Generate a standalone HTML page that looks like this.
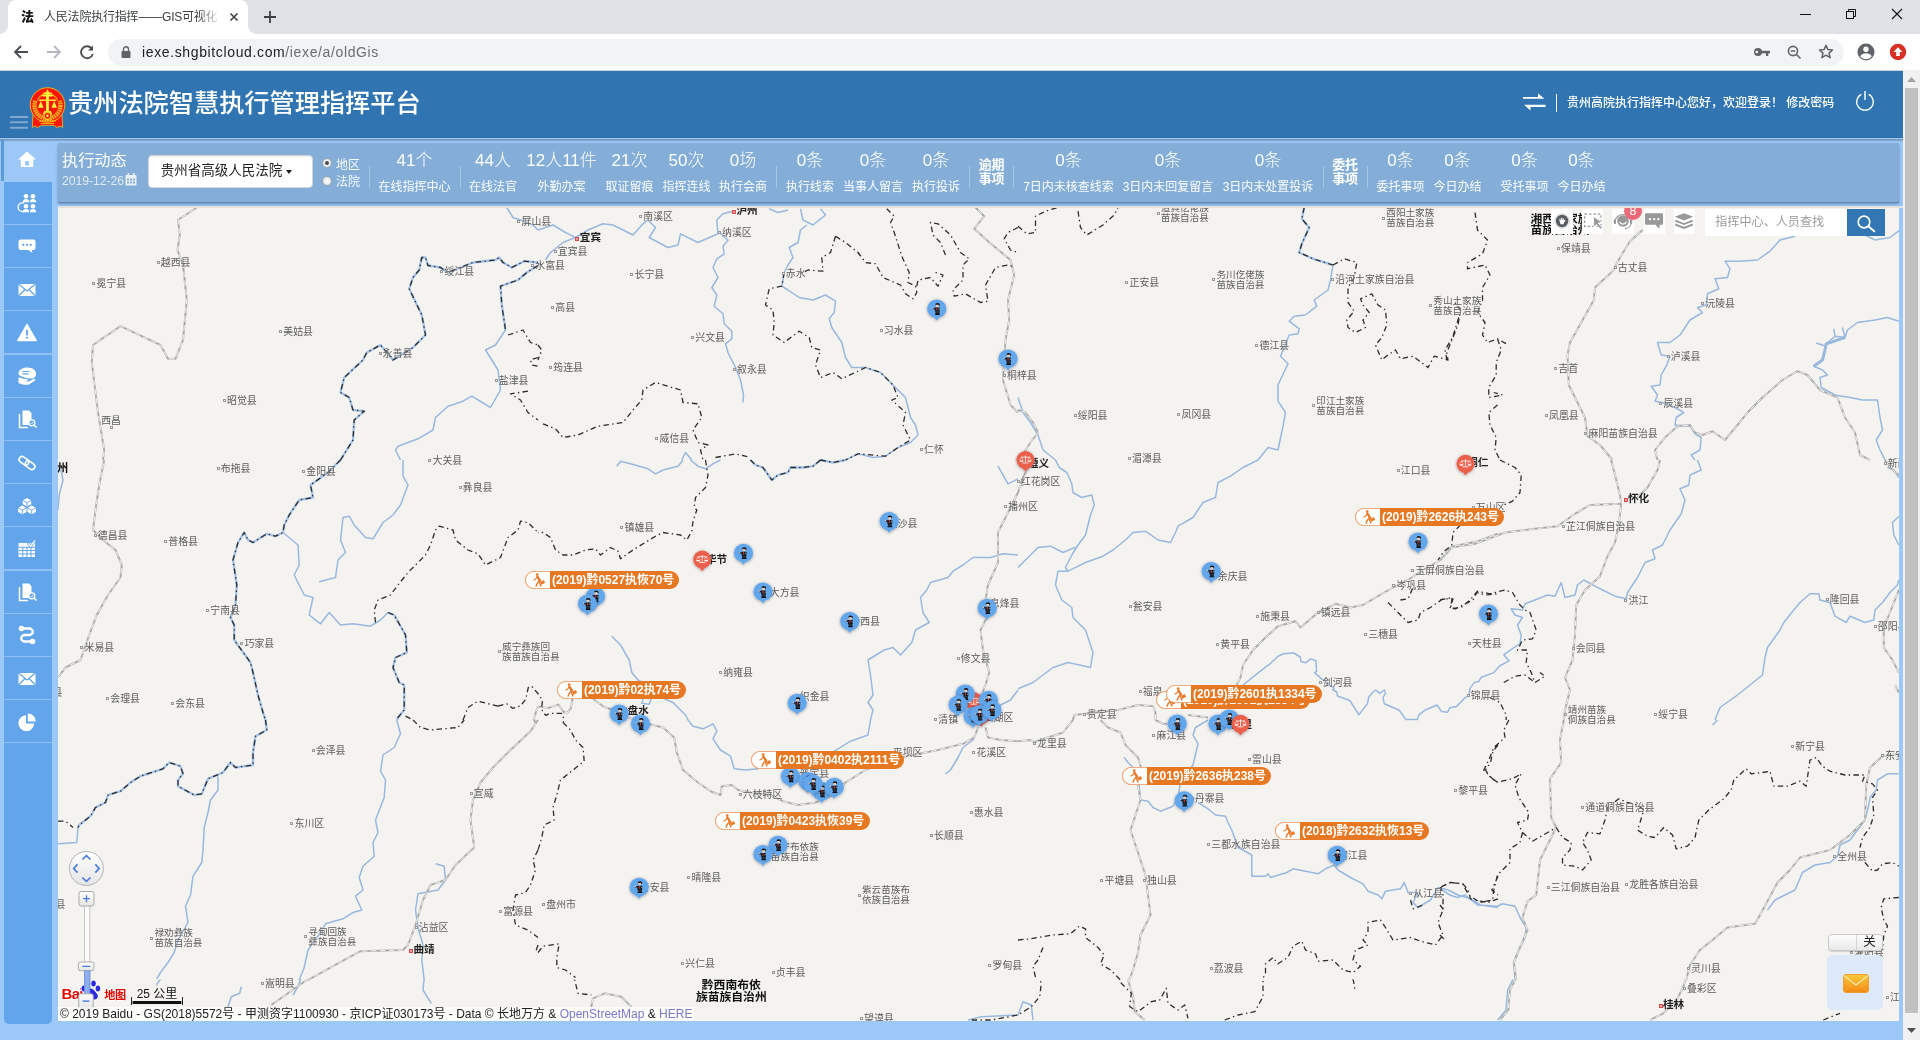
<!DOCTYPE html>
<html lang="zh-CN">
<head>
<meta charset="utf-8">
<title>人民法院执行指挥——GIS可视化</title>
<style>
*{box-sizing:border-box;margin:0;padding:0}
html,body{width:1920px;height:1040px;overflow:hidden;background:#9cc8f7;-webkit-font-smoothing:antialiased;font-family:"Liberation Sans","Noto Sans CJK SC",sans-serif;}
.abs{position:absolute}
#chrome-tabs,#toolbar,#hdr,#panel,#map,#side{will-change:transform}
#chrome-tabs{position:absolute;left:0;top:0;width:1920px;height:34px;background:#dee1e6}
#tab{position:absolute;left:8px;top:0;width:240px;height:34px;background:#fff;border-radius:8px 8px 0 0}
#tab:before,#tab:after{content:"";position:absolute;bottom:0;width:8px;height:8px;background:radial-gradient(circle at 0 0,transparent 7.5px,#fff 8px)}
#tab:before{left:-8px}
#tab:after{right:-8px;background:radial-gradient(circle at 100% 0,transparent 7.5px,#fff 8px)}
#tab .fav{position:absolute;left:13px;top:8px;font:900 13px/17px "Liberation Sans","Noto Sans CJK SC",sans-serif;color:#111}
#tab .ttl{position:absolute;left:36px;top:8px;width:178px;height:18px;overflow:hidden;white-space:nowrap;font-size:12px;line-height:18px;color:#3c4043;letter-spacing:-0.2px;-webkit-mask-image:linear-gradient(90deg,#000 155px,transparent 176px);mask-image:linear-gradient(90deg,#000 155px,transparent 176px)}
#toolbar{position:absolute;left:0;top:34px;width:1920px;height:37px;background:#fff;border-bottom:1px solid #d0d3d7}
#omni{position:absolute;left:108px;top:4.5px;width:1736px;height:27px;border-radius:14px;background:#f1f3f4}
#omni .url{position:absolute;left:34px;top:4px;font-size:14px;line-height:19px;color:#202124;white-space:nowrap;letter-spacing:0.63px}
#omni .url span{color:#6a6e73}
#hdr{position:absolute;left:0;top:71px;width:1903px;height:67px;background:#3075b2;border-bottom:1px solid #2b6cad}
#hdr .title{position:absolute;left:68px;top:14px;font-size:25.2px;line-height:36px;color:#fff;white-space:nowrap;letter-spacing:0;font-weight:500}
#hdr .wel{position:absolute;left:1567px;top:23px;font-size:12px;line-height:18px;color:#fff;white-space:nowrap;font-weight:500;letter-spacing:0}
#hline{position:absolute;left:0;top:138px;width:1903px;height:4px;background:linear-gradient(#a3c9f5 0,#a3c9f5 1px,#7395b8 1.2px,#7799bd 2.1px,#8fb8e6 2.8px,#9cc8f7 4px)}
#vbar{position:absolute;left:1px;top:140px;width:3px;height:41px;background:#5b9bd5}
#side{position:absolute;left:4px;top:182px;width:48px;height:842px;background:#62a5ea;border-radius:0 0 5px 5px}
#side i{position:absolute;left:0;width:48px;height:1.3px;background:#8fc0f3}
.sico{position:absolute;left:17px;width:22px;height:22px}
#panel{position:absolute;left:58px;top:143px;width:1841px;height:59px;background:#84aed7;border-radius:1.500px;box-shadow:0 1px 0 #6787b0,0 2px 3px rgba(40,80,130,.5)}
#panel .n{position:absolute;top:6px;width:120px;margin-left:-60px;text-align:center;font-size:17px;line-height:24px;color:#fbfdff;white-space:nowrap;font-weight:300}
#panel .l{position:absolute;top:34.500px;width:140px;margin-left:-70px;text-align:center;font-size:12px;line-height:18px;color:#fbfdff;white-space:nowrap;letter-spacing:0}
#panel .s{position:absolute;top:23px;width:1px;height:22px;background:#a6c6e6}
#panel .b{position:absolute;top:15px;width:40px;margin-left:-20px;text-align:center;font-size:13px;line-height:13.5px;font-weight:700;color:#fff;letter-spacing:-0.3px}
#map{position:absolute;left:58px;top:206px;width:1841px;height:815px;background:#f5f3f0;overflow:hidden}
#mtop{position:absolute;left:58px;top:205.600px;width:1845px;height:2px;background:#e3e1de}
#sbar{position:absolute;left:1903px;top:70px;width:17px;height:970px;background:#f1f1f1}
#sbar .th{position:absolute;left:2px;top:18px;width:13px;height:925px;background:#c1c1c1}
</style>
</head>
<body>
<div id="chrome-tabs">
  <div id="tab"><span class="fav">法</span><span class="ttl">人民法院执行指挥——GIS可视化</span>
    <svg class="abs" style="left:219px;top:10px" width="14" height="14" viewBox="0 0 14 14"><path d="M3.5 3.5l7 7M10.5 3.5l-7 7" stroke="#3c4043" stroke-width="1.6"/></svg>
  </div>
  <svg class="abs" style="left:262px;top:9px" width="16" height="16" viewBox="0 0 16 16"><path d="M8 2v12M2 8h12" stroke="#3c4043" stroke-width="1.8"/></svg>
  <svg class="abs" style="left:1790px;top:4px" width="130" height="24" viewBox="0 0 130 24"><path d="M10 10.5h11" stroke="#111" stroke-width="1"/><rect x="56.500" y="7.500" width="7" height="7" fill="none" stroke="#111"/><path d="M58.500 7.500v-2h7v7h-2" fill="none" stroke="#111"/><path d="M102 5l10 10M112 5l-10 10" stroke="#111" stroke-width="1.100"/></svg>
</div>
<div id="toolbar">
  <svg class="abs" style="left:12px;top:8px" width="90" height="20" viewBox="0 0 90 20"><g fill="none" stroke="#494c50" stroke-width="1.800"><path d="M16 10H3.500M9 4l-6 6 6 6"/><path d="M35 10h12.500M42 4l6 6-6 6" stroke="#b4b7bb"/><path d="M79.500 6.200A6 6 0 1 0 80.800 12"/></g><path d="M81 3.500v5h-5z" fill="#494c50"/></svg>
  <div id="omni">
    <svg class="abs" style="left:12px;top:6.500px" width="12" height="14" viewBox="0 0 12 14"><rect x="1.500" y="6" width="9" height="7" rx="1" fill="#5f6368"/><path d="M3.500 6V4.200a2.500 2.500 0 0 1 5 0V6" fill="none" stroke="#5f6368" stroke-width="1.400"/></svg>
    <div class="url">iexe.shgbitcloud.com<span>/iexe/a/oldGis</span></div>
  </div>
  <svg class="abs" style="left:1750px;top:6px" width="160" height="24" viewBox="0 0 160 24"><g fill="#5f6368"><circle cx="8" cy="12" r="4"/><rect x="10" y="10.800" width="10" height="2.500"/><rect x="16" y="12" width="2.300" height="4"/></g><circle cx="6.800" cy="12" r="1.300" fill="#fff"/><g fill="none" stroke="#5f6368" stroke-width="1.600"><circle cx="43" cy="11" r="4.600"/><path d="M46.500 14.500l4 4M40.800 11h4.400"/><path d="M76 5.300l1.900 4.300 4.600.4-3.500 3.100 1.100 4.600-4.100-2.500-4.100 2.500 1.100-4.600-3.500-3.100 4.600-.4z" stroke-linejoin="round" stroke-width="1.500"/></g><circle cx="116" cy="12" r="8.500" fill="#5f6368"/><circle cx="116" cy="9.300" r="2.700" fill="#fff"/><path d="M110.200 16.300c1.500-2.300 3.600-3 5.800-3s4.300.7 5.800 3c-1.500 1.900-3.500 2.900-5.800 2.900s-4.300-1-5.800-2.900z" fill="#fff"/><circle cx="148" cy="12" r="8.200" fill="#d93025"/><path d="M148 7.300l4.500 4.700h-2.700v4h-3.600v-4h-2.700z" fill="#fff"/></svg>
</div>
<div id="hdr">
<svg class="abs" style="left:10px;top:44px" width="18" height="14" viewBox="0 0 18 14"><path d="M0 2h18M0 7.300h18M0 12.800h18" stroke="#7fa8d1" stroke-width="2"/></svg>
<svg class="abs" style="left:29px;top:16px" width="37" height="42" viewBox="0 0 37 42">
<path d="M4 28L3.300 40.300L6.800 39L8.300 41L12 38.300H25L28.700 41L30.200 39L33.700 40.300L33 28z" fill="#f81808" stroke="#f6d21c" stroke-width=".7" stroke-linejoin="round"/>
<circle cx="18.500" cy="18" r="17.300" fill="#fa1505" stroke="#f4c41a" stroke-width=".9"/>
<circle cx="18.500" cy="18.500" r="13" fill="none" stroke="#f6b01c" stroke-width="4.400" stroke-dasharray="1.700 .6"/>
<path d="M3.500 12.500a16.500 16.500 0 0 1 30 0l-4.200 1.800a11 11 0 0 0-21.600 0z" fill="#fa1505"/>
<g fill="#fdf53c"><path d="M18.500 2.300l1.400 2.500h-2.800z"/><rect x="17.100" y="4.500" width="2.800" height="20"/><path d="M14 5.600h9l-.7 1.400h-7.600z"/><path d="M12.800 7.800h11.400l-1 1.800h-9.400z"/><rect x="9.800" y="12.500" width="17.400" height="1.400"/><path d="M11.800 14l2.800 6.800H9z"/><path d="M25.200 14l2.800 6.800h-5.600z"/><path d="M15.300 24h6.400l1.600 3.200h-9.600z"/></g>
<circle cx="18.500" cy="28.800" r="3.500" fill="#f81808" stroke="#f6c81c" stroke-width="1.400"/><circle cx="18.500" cy="28.800" r="1.200" fill="#fdf53c"/>
<path d="M10.500 33.800h16" stroke="#f6c81c" stroke-width="1.800" stroke-dasharray="1.600 .9"/>
<path d="M12 36.500h13" stroke="#f9a51c" stroke-width="1"/>
</svg>
<div class="title">贵州法院智慧执行管理指挥平台</div>
<svg class="abs" style="left:1523px;top:22px" width="23" height="18" viewBox="0 0 23 18"><path d="M0 5.800h21.500L15 0.500v3.400H0zM22.500 11.800H1L7.500 17.500v-3.400h15z" fill="#fff"/></svg>
<div class="abs" style="left:1556px;top:23px;width:1px;height:18px;background:#fff"></div>
<div class="wel">贵州高院执行指挥中心您好，欢迎登录！ 修改密码</div>
<svg class="abs" style="left:1855px;top:19px" width="20" height="22" viewBox="0 0 20 22"><path d="M6.300 4.400a8.300 8.300 0 1 0 7.400 0" fill="none" stroke="#fff" stroke-width="1.300"/><path d="M10 1v9" stroke="#fff" stroke-width="1.400"/></svg>
</div>
<div id="panel">
<div class="abs" style="left:4px;top:5px;font-size:16.200px;line-height:24px;color:#fbfdff;white-space:nowrap">执行动态</div>
<div class="abs" style="left:4px;top:29.500px;font-size:12.300px;line-height:16px;color:#dfe9f3;white-space:nowrap;letter-spacing:-0.08px">2019-12-26</div>
<svg class="abs" style="left:66.500px;top:29.500px" width="12" height="13" viewBox="0 0 12 13"><rect x=".5" y="2" width="11" height="10.500" rx="1" fill="#e8f0f8"/><rect x="2.500" y="0" width="1.600" height="3.500" fill="#e8f0f8"/><rect x="7.900" y="0" width="1.600" height="3.500" fill="#e8f0f8"/><g fill="#84aed7"><rect x="2" y="5.500" width="2" height="2"/><rect x="5" y="5.500" width="2" height="2"/><rect x="8" y="5.500" width="2" height="2"/><rect x="2" y="8.500" width="2" height="2"/><rect x="5" y="8.500" width="2" height="2"/><rect x="8" y="8.500" width="2" height="2"/></g></svg>
<div class="abs" style="left:90.300px;top:12.300px;width:164.500px;height:33.200px;background:#fff;border-radius:4px;border:1px solid #cfd6de;box-shadow:inset 0 1px 1px rgba(0,0,0,.08)"><span class="abs" style="left:11.500px;top:4.500px;font-size:13.500px;line-height:19px;color:#222;white-space:nowrap">贵州省高级人民法院</span><span class="abs" style="left:136.500px;top:13.500px;width:0;height:0;border:3.500px solid transparent;border-top:4px solid #222;border-bottom:0"></span></div>
<span class="abs" style="left:264px;top:15px;width:10px;height:10px;border-radius:50%;background:radial-gradient(#fff,#dcdcdc);border:1px solid #9aa6b2"></span><span class="abs" style="left:267px;top:18px;width:4px;height:4px;border-radius:50%;background:#4a4a4a"></span>
<span class="abs" style="left:264px;top:32.500px;width:10px;height:10px;border-radius:50%;background:radial-gradient(#fff,#d8d8d8);border:1px solid #9aa6b2"></span>
<div class="abs" style="left:278px;top:14px;font-size:12px;line-height:17px;color:#f4f9ff;white-space:nowrap">地区</div>
<div class="abs" style="left:278px;top:31px;font-size:12px;line-height:17px;color:#f4f9ff;white-space:nowrap">法院</div>
<div class="n" style="left:356.5px">41个</div><div class="l" style="left:356.5px">在线指挥中心</div>
<div class="n" style="left:435px">44人</div><div class="l" style="left:435px">在线法官</div>
<div class="n" style="left:503.5px">12人11件</div><div class="l" style="left:503.5px">外勤办案</div>
<div class="n" style="left:571.5px">21次</div><div class="l" style="left:571.5px">取证留痕</div>
<div class="n" style="left:628.5px">50次</div><div class="l" style="left:628.5px">指挥连线</div>
<div class="n" style="left:685px">0场</div><div class="l" style="left:685px">执行会商</div>
<div class="n" style="left:752px">0条</div><div class="l" style="left:752px">执行线索</div>
<div class="n" style="left:815px">0条</div><div class="l" style="left:815px">当事人留言</div>
<div class="n" style="left:878px">0条</div><div class="l" style="left:878px">执行投诉</div>
<div class="n" style="left:1010.5px">0条</div><div class="l" style="left:1010.5px">7日内未核查线索</div>
<div class="n" style="left:1110px">0条</div><div class="l" style="left:1110px">3日内未回复留言</div>
<div class="n" style="left:1210px">0条</div><div class="l" style="left:1210px">3日内未处置投诉</div>
<div class="n" style="left:1342.5px">0条</div><div class="l" style="left:1342.5px">委托事项</div>
<div class="n" style="left:1399.5px">0条</div><div class="l" style="left:1399.5px">今日办结</div>
<div class="n" style="left:1466.5px">0条</div><div class="l" style="left:1466.5px">受托事项</div>
<div class="n" style="left:1523.5px">0条</div><div class="l" style="left:1523.5px">今日办结</div>
<div class="s" style="left:311.0px"></div>
<div class="s" style="left:402.0px"></div>
<div class="s" style="left:718.3px"></div>
<div class="s" style="left:911.0px"></div>
<div class="s" style="left:954.5px"></div>
<div class="s" style="left:1264.5px"></div>
<div class="s" style="left:1309.0px"></div>
<div class="b" style="left:933.5px">逾期<br>事项</div>
<div class="b" style="left:1287px">委托<br>事项</div>
</div>
<div id="hline"></div><div id="vbar"></div><div id="side">
<i style="top:41.6px"></i>
<i style="top:84.8px"></i>
<i style="top:128.0px"></i>
<i style="top:171.3px"></i>
<i style="top:214.5px"></i>
<i style="top:257.7px"></i>
<i style="top:300.9px"></i>
<i style="top:344.1px"></i>
<i style="top:387.4px"></i>
<i style="top:430.6px"></i>
<i style="top:473.8px"></i>
<i style="top:517.0px"></i>
<i style="top:560.2px"></i>
</div>
<svg class="sico" style="left:16.200px;top:149.0px" width="20" height="20" viewBox="0 0 22 22"><path d="M11 2.500L2 10.500h2.800V18h12.400v-7.500H20z" fill="#fff"/><rect x="9" y="12" width="4" height="4.500" fill="#9cc8f7"/></svg>
<svg class="sico" style="left:16.200px;top:192.2px" width="20" height="20" viewBox="0 0 22 22"><g fill="#fff"><circle cx="10" cy="4.200" r="2.300"/><circle cx="17" cy="4.200" r="2.300"/><path d="M6.800 10.300c0-2.300 1.300-3.400 3.200-3.400s3.200 1.100 3.200 3.400z"/><path d="M13.800 10.300c0-2.300 1.300-3.400 3.200-3.400s3.200 1.100 3.200 3.400z"/><circle cx="10" cy="14.200" r="2.300"/><circle cx="17" cy="14.200" r="2.300"/><path d="M6.800 20.300c0-2.300 1.300-3.400 3.200-3.400s3.200 1.100 3.200 3.400z"/><path d="M13.800 20.300c0-2.300 1.300-3.400 3.200-3.400s3.200 1.100 3.200 3.400z"/></g><path d="M8 10.800H6.500a4.300 4.300 0 0 0 0 8.700H8" fill="none" stroke="#fff" stroke-width="1.300"/></svg>
<svg class="sico" style="left:16.200px;top:235.4px" width="20" height="20" viewBox="0 0 22 22"><path d="M4.500 4.500h13a2 2 0 0 1 2 2v6.500a2 2 0 0 1-2 2h-1.800l.8 3-4.300-3H4.500a2 2 0 0 1-2-2V6.500a2 2 0 0 1 2-2z" fill="#fff"/><g fill="#62a5ea"><circle cx="7.300" cy="9.800" r="1.150"/><circle cx="11" cy="9.800" r="1.150"/><circle cx="14.700" cy="9.800" r="1.150"/></g></svg>
<svg class="sico" style="left:16.200px;top:278.7px" width="20" height="20" viewBox="0 0 22 22"><rect x="2.500" y="5" width="17" height="12" fill="#fff"/><path d="M2.500 5l8.500 7 8.500-7M2.500 17l6.300-6.200M19.500 17l-6.300-6.200" fill="none" stroke="#62a5ea" stroke-width="1.300"/></svg>
<svg class="sico" style="left:16.200px;top:321.9px" width="20" height="20" viewBox="0 0 22 22"><path d="M11 2.500L1.800 18.500h18.400z" fill="#fff" stroke="#fff" stroke-width="1.500" stroke-linejoin="round"/><rect x="10.100" y="8" width="1.800" height="5.500" fill="#62a5ea"/><rect x="10.100" y="14.800" width="1.800" height="1.900" fill="#62a5ea"/></svg>
<svg class="sico" style="left:16.200px;top:365.1px" width="20" height="20" viewBox="0 0 22 22"><path d="M11.500 2.500c5 0 8.500 2.800 8.500 6.300 0 2-1 3.600-2.600 4.600l-6.400-.2-6.500-2.200C3 10.300 2.500 9.300 2.500 8.500 2.500 5 6.300 2.500 11.500 2.500z" fill="#fff"/><path d="M6.500 6.500h7M6.500 8.900h6" stroke="#62a5ea" stroke-width="1.200"/><path d="M2.500 12.500c1.500 0 3 .5 4.500 1.300l4 .3c1.200.1 1.200 1.600 0 1.700l-3 .1 4.500.6 5.500-2.500c1.300-.5 2 .8 1 1.600l-6 3.900c-3 .8-6.500.3-10.500-1.500z" fill="#fff"/></svg>
<svg class="sico" style="left:16.200px;top:408.3px" width="20" height="20" viewBox="0 0 22 22"><path d="M6.500 2.500h6.500l2.500 2.500v6.500a4.200 4.200 0 0 0-2.500 5.500H6.500z" fill="#fff"/><path d="M3.500 6v13.500h8.500" fill="none" stroke="#fff" stroke-width="1.500"/><circle cx="15.800" cy="14.800" r="3" fill="none" stroke="#fff" stroke-width="1.300"/><path d="M18 17l2.500 2.500" stroke="#fff" stroke-width="1.600"/><path d="M14.500 14.800l1 1 1.600-1.800" fill="none" stroke="#fff" stroke-width=".9"/></svg>
<svg class="sico" style="left:16.200px;top:451.5px" width="20" height="20" viewBox="0 0 22 22"><g fill="none" stroke="#fff" stroke-width="1.600" transform="rotate(36 11 11)"><rect x="2" y="8" width="10.500" height="6" rx="3"/><rect x="9.500" y="8" width="10.500" height="6" rx="3"/></g></svg>
<svg class="sico" style="left:16.200px;top:495.8px" width="20" height="20" viewBox="0 0 22 22"><path d="M11 2.0l4.2 2.3100000000000005v3.9899999999999998l-4.2 2.3100000000000005l-4.2 -2.3100000000000005v-3.9899999999999998z" fill="#fff"/><path d="M6.8 4.3100000000000005l4.2 2.3100000000000005l4.2 -2.3100000000000005M11 6.620000000000001v3.9899999999999998" fill="none" stroke="#62a5ea" stroke-width=".9"/><path d="M6.3 9.600000000000001l4.2 2.3100000000000005v3.9899999999999998l-4.2 2.3100000000000005l-4.2 -2.3100000000000005v-3.9899999999999998z" fill="#fff"/><path d="M2.0999999999999996 11.910000000000002l4.2 2.3100000000000005l4.2 -2.3100000000000005M6.3 14.220000000000002v3.9899999999999998" fill="none" stroke="#62a5ea" stroke-width=".9"/><path d="M15.7 9.600000000000001l4.2 2.3100000000000005v3.9899999999999998l-4.2 2.3100000000000005l-4.2 -2.3100000000000005v-3.9899999999999998z" fill="#fff"/><path d="M11.5 11.910000000000002l4.2 2.3100000000000005l4.2 -2.3100000000000005M15.7 14.220000000000002v3.9899999999999998" fill="none" stroke="#62a5ea" stroke-width=".9"/></svg>
<svg class="sico" style="left:16.200px;top:538.0px" width="20" height="20" viewBox="0 0 22 22"><rect x="2.500" y="5" width="16.500" height="14" fill="#fff"/><path d="M2.500 9.300h16.500M2.500 12.600h16.500M2.500 15.900h16.500M6.800 9.300V19M10.900 9.300V19M15 9.300V19" stroke="#62a5ea" stroke-width="1"/><path d="M12 5l2.500 3.500L19.500 2" fill="none" stroke="#62a5ea" stroke-width="2.600"/><path d="M12.300 5.300l2.200 3L19 2.500" fill="none" stroke="#fff" stroke-width="1.300"/></svg>
<svg class="sico" style="left:16.200px;top:581.2px" width="20" height="20" viewBox="0 0 22 22"><path d="M6.500 2.500h6.500l2.500 2.500v6.500a4.200 4.200 0 0 0-2.500 5.500H6.500z" fill="#fff"/><path d="M3.500 6v13.500h8.500" fill="none" stroke="#fff" stroke-width="1.500"/><circle cx="15.800" cy="14.800" r="3" fill="none" stroke="#fff" stroke-width="1.300"/><path d="M18 17l2.500 2.500" stroke="#fff" stroke-width="1.600"/><path d="M14.500 14.800l1 1 1.600-1.800" fill="none" stroke="#fff" stroke-width=".9"/></svg>
<svg class="sico" style="left:16.200px;top:624.4px" width="20" height="20" viewBox="0 0 22 22"><circle cx="5.500" cy="4.500" r="2.800" fill="#fff"/><circle cx="16.500" cy="17.500" r="2.800" fill="#fff"/><path d="M5.500 4.500h8a3.200 3.200 0 0 1 0 6.500h-5a3.200 3.200 0 0 0 0 6.500h8" fill="none" stroke="#fff" stroke-width="2.300"/></svg>
<svg class="sico" style="left:16.200px;top:667.6px" width="20" height="20" viewBox="0 0 22 22"><rect x="2.500" y="5" width="17" height="12" fill="#fff"/><path d="M2.500 5l8.500 7 8.500-7M2.500 17l6.300-6.200M19.500 17l-6.300-6.200" fill="none" stroke="#62a5ea" stroke-width="1.300"/></svg>
<svg class="sico" style="left:16.200px;top:710.9px" width="20" height="20" viewBox="0 0 22 22"><path d="M10 4.200a8 8 0 1 0 8.300 8.300H10z" fill="#fff"/><path d="M11.800 2.500a8 8 0 0 1 8 8h-8z" fill="#fff"/></svg>
<style>
#map .mk{position:absolute;width:3.200px;height:3.200px;border:.7px solid #999;background:#f7f6f4}
#map .mk.r{border-color:#e0484a;background:#f2a0a0;width:4px;height:4px}
#map .lb{position:absolute;font-size:9.900px;line-height:9.600px;color:#5c5c5c;white-space:nowrap;letter-spacing:0;text-shadow:0 0 1px #f5f3f0}
#map .lb.ml{line-height:10px;font-size:9.600px}
#map .lb.cb{font-size:10.600px;line-height:15px;font-weight:700;color:#222}
#map .lb.pb{font-size:11.800px;line-height:11.800px;font-weight:700;color:#111;text-align:center}
#map .ol{position:absolute;height:17.900px;border-radius:9px;background:#e87722;overflow:hidden}
#map .ol .ow{position:absolute;left:0;top:0;height:18px;background:#fff;border:1px solid #f1ab80;border-right:0;border-radius:9px 0 0 9px}
#map .ol .ot{position:absolute;top:0;font-size:12px;line-height:19px;font-weight:700;color:#fff;white-space:nowrap;letter-spacing:-0.03px}
#map .tsq{position:absolute;top:2px;height:24.600px;background:#fff}
</style>
<div id="map">
<svg class="abs" style="left:0;top:0" width="1841" height="815" viewBox="58 206 1841 815" fill="none" stroke-linejoin="round" stroke-linecap="butt">
<defs><clipPath id="cb"><rect x="58" y="979.500" width="1841" height="42"/></clipPath></defs>
<path d="M505.5 330.0 L495.5 345.0 L485.5 350.0 L498.0 370.0 L500.5 390.0 L490.5 407.5 L471.8 396.2 L463.0 401.2 L448.0 406.2 L435.5 417.5 L433.0 430.0 L418.0 438.8 L398.0 446.2 L395.5 450.0 L400.5 460.0 M506.8 207.5 L513.0 217.5 L520.5 220.0 L533.0 225.0 L538.0 230.0 M538.0 230.0 L553.0 225.0 L565.5 232.5 L575.5 237.5 L588.0 230.0 L603.0 223.8 L613.0 225.0 L633.0 235.0 L643.0 223.8 L648.0 220.0 L655.5 227.5 L649.2 237.5 L668.0 247.5 L678.0 245.0 L680.5 233.8 L698.0 242.5 L718.0 233.8 L716.8 220.0 L723.0 213.8 L733.0 211.2 M575.5 237.5 L563.0 242.5 L550.5 252.5 L545.5 260.0 M769.2 208.8 L778.0 212.5 L788.0 210.0 M800.5 208.8 L803.0 220.0 L813.0 225.0 L825.5 215.0 L820.5 208.8 M719.2 232.5 L728.0 240.0 L723.0 246.2 L724.2 253.8 L716.8 258.8 L713.0 267.5 L718.0 277.5 L711.8 287.5 L716.8 295.0 L714.2 306.2 L723.0 313.8 L724.2 323.8 L731.8 331.2 L731.8 338.8 L725.5 343.8 L728.0 352.5 L735.5 367.5 L740.5 380.0 L743.5 395.0 L743.0 402.5 M806.8 225.0 L800.5 230.0 L798.0 242.5 L789.2 247.5 L793.0 257.5 L788.0 265.0 L784.2 272.5 L781.8 286.2 L788.0 290.0 L799.2 297.5 L813.0 300.0 L825.5 295.0 L835.5 301.2 L834.2 312.5 L829.2 318.8 L831.8 327.5 L841.8 342.5 L845.5 357.5 L851.8 367.5 L865.5 367.5 L880.5 372.5 L893.0 385.0 L905.5 397.5 L908.0 407.5 L910.5 417.5 L915.5 425.0 L918.0 435.0 L910.5 442.5 L898.0 447.5 L885.5 456.2 L873.0 457.5 L858.0 453.8 L845.5 460.0 M681.8 460.0 L685.5 452.5 L691.8 460.0 M1333.0 265.0 L1330.5 280.0 L1328.0 290.0 L1314.2 300.0 L1316.8 306.2 L1305.5 315.0 L1294.2 316.2 L1289.2 321.2 L1299.2 328.8 L1298.0 333.8 L1289.2 335.0 L1280.5 356.2 L1288.0 363.8 L1278.0 385.0 L1278.0 401.2 L1285.5 412.5 L1283.0 426.2 L1278.0 450.0 L1268.0 447.5 L1258.0 460.0 M1018.0 397.5 L1023.0 412.5 L1030.5 422.5 L1038.0 435.0 L1043.0 450.0 L1055.5 460.0 M1900.0 230.0 L1890.0 237.5 L1875.0 240.0 L1865.0 235.0 M1795.0 236.2 L1780.0 240.0 L1770.0 251.2 L1757.5 260.0 L1740.0 261.2 L1725.0 261.2 L1730.0 268.8 L1727.5 277.5 L1715.0 278.8 L1718.8 288.8 L1707.5 293.8 L1706.2 305.0 L1697.5 307.5 L1702.5 312.5 L1690.0 320.0 L1680.0 335.0 L1670.0 342.5 L1657.5 342.5 L1661.2 355.0 L1670.0 356.2 L1666.2 366.2 L1661.2 375.0 L1660.0 385.0 L1651.2 386.2 L1657.5 395.0 L1655.0 401.2 L1662.5 402.5 L1675.0 407.5 L1683.8 412.5 L1676.2 417.5 L1675.0 425.0 L1690.0 426.2 L1695.0 433.8 L1701.2 437.5 L1700.0 450.0 L1691.2 455.0 L1695.0 460.0 M1898.8 321.2 L1887.5 317.5 L1875.0 320.0 L1857.5 322.5 L1847.5 330.0 L1845.0 337.5 L1835.0 336.2 L1826.2 343.8 L1825.0 350.0 L1822.5 360.0 L1813.8 366.2 L1822.5 370.0 L1827.5 375.0 L1820.0 377.5 L1821.2 387.5 L1835.0 395.0 L1850.0 397.5 L1862.5 400.0 L1877.5 400.0 L1880.0 417.5 L1882.5 430.0 L1876.2 440.0 L1880.0 450.0 L1885.0 460.0 M1833.8 328.8 L1835.0 336.2 M1816.2 343.0 L1826.2 346.2 M1842.5 327.5 L1845.0 337.5 M60.5 467.5 L63.0 480.0 L59.2 495.0 L58.0 510.0 M283.0 532.5 L298.0 545.0 L299.2 565.0 L294.2 575.0 L304.2 595.0 L313.0 597.5 L309.2 615.0 L320.5 623.8 L329.2 612.5 L340.5 625.0 L353.0 623.8 L370.5 626.2 L380.5 620.0 L388.0 612.5 M403.0 460.0 L403.0 476.2 L408.0 485.0 L400.5 505.0 L393.0 515.0 L383.0 522.5 L373.0 538.8 L365.5 537.5 L354.2 525.0 L349.2 516.2 L343.0 517.5 L340.5 540.0 L345.5 552.5 L338.0 560.0 L335.5 577.5 L319.2 581.8 M616.8 466.2 L620.5 461.2 L630.5 463.8 L648.0 468.8 L655.5 473.8 L663.0 470.0 L678.0 466.2 L683.0 460.0 M690.5 460.0 L698.0 466.2 L705.5 468.8 L713.0 463.8 L720.5 460.0 M998.0 466.2 L1008.0 483.8 L1018.0 478.8 M1018.0 555.0 L1003.0 553.8 L990.5 557.5 L973.0 557.5 L963.0 565.0 L953.0 571.2 L948.0 577.5 L930.5 582.5 L926.8 590.0 L920.5 597.5 L923.0 612.5 L929.2 622.5 L915.5 630.0 L911.8 642.5 L900.5 655.0 L893.0 647.5 L884.2 650.0 L868.0 660.0 L870.5 675.0 L873.0 695.0 L868.0 702.5 L873.0 710.0 L870.5 720.0 M611.8 636.2 L620.5 645.0 L629.2 660.0 L631.8 672.5 L638.0 680.0 L648.0 685.0 L655.5 695.0 L673.0 702.5 L685.5 715.0 L688.0 720.0 M1018.0 690.0 L1010.5 700.0 L1000.5 705.0 L998.0 710.0 M643.6 697.0 L641.7 703.3 L649.2 704.2 L651.7 697.0 M1055.5 460.0 L1059.2 467.5 L1066.8 472.5 L1071.8 483.8 L1073.0 492.5 L1081.8 497.5 L1091.8 495.0 L1094.2 505.0 L1090.5 515.0 L1085.5 535.0 L1078.0 545.0 L1071.8 555.0 L1065.5 567.5 L1068.0 571.2 M1258.0 460.0 L1243.0 467.5 L1230.5 476.2 L1218.0 482.5 L1215.5 497.5 L1203.0 502.5 L1193.0 517.5 L1178.0 526.2 L1175.5 532.5 L1170.5 542.5 L1158.0 540.0 L1145.5 531.2 L1133.0 532.5 L1125.5 540.0 L1113.0 550.0 L1103.0 556.2 L1085.5 562.5 L1068.0 571.2 L1058.0 571.2 L1055.5 585.0 L1061.8 600.0 L1071.8 607.5 L1073.0 617.5 L1085.5 630.0 L1093.0 652.5 L1090.5 667.5 L1068.0 662.5 L1053.0 667.5 L1033.0 682.5 L1018.0 688.8 M1018.0 567.5 L1025.5 560.0 L1038.0 547.5 L1050.5 546.2 L1063.0 552.5 L1078.0 546.2 M1243.0 685.0 L1262.6 669.3 L1269.0 664.7 L1278.0 656.3 L1283.4 653.7 L1293.8 653.0 L1300.3 657.0 L1301.0 661.5 L1305.5 662.8 L1310.7 658.9 L1316.0 660.8 L1316.6 671.3 L1314.6 672.6 L1321.0 678.4 L1334.0 688.2 L1332.9 690.0 L1336.8 692.0 L1337.4 696.0 L1349.8 700.5 L1358.9 714.9 L1367.4 703.8 L1368.7 697.3 L1373.0 692.0 L1375.8 690.0 L1379.7 693.4 L1384.3 690.0 L1385.6 693.4 L1383.0 697.3 L1384.3 703.8 L1399.3 710.3 L1405.8 719.4 L1417.5 719.4 L1418.8 714.9 L1424.7 710.3 L1437.0 705.0 L1441.6 711.6 L1447.5 712.3 L1450.0 707.7 L1456.6 706.4 L1465.7 697.3 L1469.0 695.3 L1470.0 688.4 L1474.4 682.4 L1478.7 681.5 L1481.3 677.2 L1493.4 672.9 L1499.5 666.0 L1509.0 660.8 L1503.8 654.7 L1520.0 643.5 M1697.5 460.0 L1701.2 470.0 L1690.0 475.0 L1688.8 485.0 L1680.0 488.8 L1685.0 500.0 L1681.2 513.8 L1670.0 530.0 L1662.5 545.0 L1652.5 550.0 L1655.0 558.8 L1645.0 562.5 L1637.5 577.5 L1627.5 592.5 L1626.2 598.8 M1626.2 598.8 L1615.0 596.2 L1602.5 590.0 L1595.0 586.2 L1583.8 580.0 L1577.5 585.0 L1575.0 595.0 L1565.0 597.5 L1561.2 582.5 L1555.0 596.2 L1547.5 595.0 L1535.0 600.0 L1525.0 603.8 L1522.5 610.0 L1511.2 608.8 L1515.0 615.0 L1522.5 617.5 L1517.5 625.0 L1521.2 635.0 L1520.0 643.5 M1715.0 720.0 L1720.0 707.5 L1737.5 695.0 L1750.0 685.0 L1762.5 675.0 L1765.0 657.5 L1767.5 647.5 L1780.0 630.0 L1783.8 622.5 L1793.8 610.0 L1800.0 602.5 L1810.0 593.8 L1818.8 593.8 L1820.0 600.0 L1830.0 602.5 L1835.0 616.2 L1846.2 622.5 L1850.0 616.2 L1856.2 618.8 L1865.0 622.5 L1873.8 620.0 L1875.0 610.0 L1882.5 602.5 L1890.0 592.5 L1897.5 585.0 L1898.8 580.0 M1898.8 516.2 L1892.5 522.5 L1893.8 535.0 L1898.8 545.0 M1898.8 477.5 L1893.8 470.0 L1887.5 467.5 M78.0 827.5 L76.8 842.5 L58.0 843.8 M218.0 776.2 L218.0 790.0 L210.5 800.0 L208.0 812.5 L204.2 827.5 L203.0 850.0 L201.8 862.5 L193.0 876.2 L190.5 895.0 L185.5 906.2 L188.0 922.5 L178.0 940.0 L174.2 952.5 L168.0 962.5 L160.5 972.5 L156.8 978.8 M396.8 720.0 L400.5 733.8 L394.2 747.5 L383.0 755.0 L380.5 771.2 L385.5 780.0 L384.2 797.5 L375.5 820.0 L378.0 832.5 L373.0 842.5 L374.2 856.2 L363.0 866.2 L359.2 877.5 L363.0 890.0 L355.5 896.2 L361.8 910.0 L353.0 912.5 L343.0 918.8 L325.5 923.8 L320.5 932.5 L308.0 950.0 L304.2 967.5 L299.2 980.0 M435.5 863.8 L444.2 866.2 L445.5 880.0 L438.0 890.0 L418.0 893.8 L415.5 910.0 L418.0 927.5 L423.0 945.0 L421.8 960.0 L424.2 980.0 M688.0 720.0 L693.0 726.2 L703.0 728.8 L713.0 723.8 L716.8 731.2 L713.0 738.8 L720.5 750.0 L730.5 756.2 L734.2 768.8 L745.5 770.0 L758.0 768.8 M870.5 720.0 L868.0 735.0 L850.5 741.2 L838.0 748.8 L830.5 753.8 M978.0 727.5 L973.0 740.0 L963.0 747.5 L958.0 757.5 L950.5 770.0 L945.5 773.8 M1208.0 720.0 L1195.5 727.5 L1193.0 735.0 L1198.0 743.8 L1193.0 765.0 L1180.5 782.5 L1178.0 797.5 L1173.0 806.2 L1160.5 811.2 L1153.0 807.5 L1148.0 801.2 L1140.5 800.0 L1139.2 785.0 L1135.5 770.0 L1128.0 762.5 L1124.2 757.5 M1198.0 802.5 L1208.0 808.8 L1215.5 815.0 L1225.5 816.2 L1228.0 822.5 L1231.8 830.0 L1238.0 847.5 L1251.8 855.0 L1251.8 876.2 L1265.5 876.2 L1268.0 873.8 L1270.5 877.5 L1286.8 872.5 L1293.0 868.8 L1305.5 871.2 L1318.0 873.8 L1325.5 868.8 L1334.2 865.0 L1338.0 870.0 L1350.5 877.5 L1363.0 883.8 L1368.0 891.2 L1378.0 895.0 L1381.8 898.8 L1385.5 891.2 L1400.5 888.8 L1404.2 882.5 L1408.0 892.5 L1418.0 892.5 L1413.0 902.5 L1418.0 907.5 L1430.5 900.0 L1438.0 887.5 L1448.0 890.0 L1458.0 895.0 L1470.5 898.8 L1480.5 905.0 L1498.0 907.5 M1440.0 888.8 L1450.0 895.0 L1457.5 897.5 L1465.0 895.0 L1477.5 905.0 L1497.5 906.2 L1502.5 903.8 L1515.0 906.2 L1520.0 917.5 L1526.2 927.5 L1525.0 937.5 L1517.5 952.5 L1513.8 962.5 L1515.0 980.0 M1898.8 773.8 L1887.5 773.8 L1877.5 780.0 L1876.2 790.0 L1870.0 797.5 L1868.8 805.0 L1865.0 820.0 L1857.5 830.0 L1850.0 840.0 L1840.0 845.0 L1837.5 856.2 L1830.0 862.5 L1815.0 865.0 L1802.5 872.5 L1795.0 890.0 L1775.0 900.0 L1767.5 910.0 M1712.5 725.0 L1717.5 720.0" stroke="#98b8de" stroke-width="1.500"/>
<path d="M340.5 460.0 L353.0 440.0 L354.2 420.0 L364.2 411.2 L353.0 410.0 L349.2 397.5 L340.5 392.5 L344.2 377.5 L363.0 360.0 L366.8 352.5 L380.5 345.0 L393.0 360.0 L413.0 347.5 L425.5 335.0 L421.8 315.0 L409.2 288.8 L413.0 277.5 L419.2 270.0 L421.8 257.5 L425.5 257.5 L428.0 265.5 L440.5 267.5 L448.0 272.5 L473.0 262.5 L495.5 260.0 L499.2 257.5 L503.0 262.5 L511.8 267.5 L524.2 261.2 L538.0 262.5 M538.0 265.5 L526.8 272.5 L518.0 280.0 L500.5 286.2 L501.8 305.0 L505.5 330.0 M1304.2 207.5 L1301.8 218.8 L1309.2 227.5 L1301.8 243.8 L1299.2 252.5 L1313.0 258.8 L1333.0 265.0 M340.5 460.0 L328.0 472.5 L310.5 485.0 L313.0 497.5 L299.2 500.0 L289.2 515.0 L284.2 525.0 L283.0 532.5 L275.5 536.2 L266.8 533.8 L253.0 542.5 L248.0 540.0 L244.2 532.5 L238.0 542.5 L233.0 560.0 L236.8 585.0 L235.5 605.0 L230.5 617.5 L234.2 625.0 L234.2 640.0 L250.5 662.5 L253.0 672.5 L258.0 695.0 L263.0 712.5 L265.5 720.0 M388.0 612.5 L394.2 615.0 L405.5 635.0 L406.8 652.5 L395.5 657.5 L393.0 667.5 L399.2 682.5 L404.2 685.0 L404.2 710.0 L398.0 717.5 L396.8 720.0 M750.5 460.0 L755.5 465.0 L763.0 467.5 L771.8 480.0 L778.0 475.0 L788.0 472.5 L790.5 467.5 L803.0 467.5 L813.0 466.2 L820.5 460.0 M820.5 460.0 L833.0 462.5 L845.5 460.0 M265.5 720.0 L266.8 730.0 L255.5 736.2 L253.0 752.5 L253.0 765.0 L235.5 767.5 L230.5 762.5 L223.0 772.5 L208.0 778.8 L201.8 793.8 L194.2 795.0 L178.0 786.2 L178.0 780.0 L183.0 773.8 L180.5 766.2 L169.2 762.5 L163.0 768.8 L140.5 776.2 L130.5 782.5 L120.5 791.2 L108.0 795.0 L105.5 802.5 L95.5 807.5 L90.5 816.2 L79.2 825.0 L78.0 827.5" stroke="#a3c2e6" stroke-width="2.300"/>
<path d="M196.8 207.5 L178.0 220.0 L179.8 235.0 L177.5 250.0 L183.0 265.0 L186.8 300.0 L183.0 340.0 L175.5 358.8 L168.0 358.8 L160.5 345.0 L120.5 326.2 L93.0 345.0 L91.8 362.5 L98.0 412.5 L104.2 450.0 L103.0 460.0 M975.5 207.5 L984.2 216.2 L974.2 228.8 L988.0 241.2 L1010.5 260.0 L1014.2 275.0 L1008.0 300.0 L1009.2 320.0 L1005.5 340.0 L1004.2 360.0 L1003.0 380.0 L1010.5 405.0 L1018.0 412.5 M1018.0 410.0 L1025.5 412.5 L1033.0 422.5 L1038.0 432.5 L1030.5 442.5 L1025.5 450.0 L1023.0 460.0 M1642.5 230.0 L1630.0 241.2 L1620.0 257.5 L1612.5 271.2 L1595.0 287.5 L1593.8 300.0 L1581.2 322.5 L1570.0 342.5 L1567.5 355.0 L1568.8 385.0 L1585.0 417.5 L1587.5 436.2 L1600.0 445.0 L1612.5 460.0 M1657.5 460.0 L1655.0 450.0 L1665.0 437.5 L1677.5 426.2 L1690.0 425.0 L1695.0 432.5 L1702.5 435.0 L1712.5 431.2 L1725.0 440.0 L1737.5 425.0 L1747.5 412.5 L1762.5 397.5 L1782.5 380.0 L1797.5 371.2 L1807.5 375.0 L1820.0 390.0 L1837.5 397.5 L1845.0 417.5 L1855.0 432.5 L1860.0 455.0 L1870.0 460.0 M104.2 460.0 L99.2 485.0 L95.5 510.0 L93.0 530.0 L103.0 540.0 L115.5 550.0 L121.8 565.0 L120.5 577.5 L108.0 595.0 L96.8 615.0 L89.2 635.0 L80.5 660.0 L65.5 667.5 L58.0 677.5 M535.5 723.0 L533.8 719.0 L537.5 707.5 L540.0 706.7 L548.3 708.0 L558.3 704.6 L564.2 712.5 L567.5 712.5 L570.8 708.3 L572.5 699.0 L573.0 692.0 M1018.0 492.5 L1013.0 502.5 L1005.5 517.5 L998.0 532.5 L998.0 562.5 L988.0 585.0 L985.5 600.0 L988.0 615.0 L980.5 630.0 L983.0 650.0 L989.2 672.5 L985.5 685.0 L980.5 697.5 M593.0 698.8 L603.0 706.2 L613.0 710.0 L628.0 717.5 L648.0 723.8 M1018.0 492.5 L1023.0 477.5 L1028.0 467.5 M1498.0 533.8 L1478.0 541.2 L1453.0 546.2 L1440.5 560.0 L1423.0 570.0 L1408.0 580.0 L1393.0 587.5 L1378.0 596.2 L1363.0 605.0 L1350.5 607.5 L1335.5 603.8 L1318.0 612.5 L1300.5 627.5 L1295.5 621.2 L1278.0 626.2 L1265.5 637.5 L1253.0 650.0 L1243.0 665.0 L1240.5 677.5 L1235.5 687.5 M1073.0 720.0 L1074.2 715.0 L1085.5 713.8 L1118.0 710.0 L1138.0 705.0 L1153.0 706.2 L1155.5 712.5 L1155.5 720.0 M1188.0 715.0 L1208.0 717.5 M1611.2 460.0 L1615.0 475.0 L1620.0 495.0 L1621.2 503.8 L1618.8 525.0 L1615.0 542.5 L1607.5 556.2 L1600.0 576.2 L1585.0 590.0 L1576.2 605.0 L1575.0 635.0 L1572.5 660.0 L1565.0 677.5 L1570.0 690.0 L1565.0 710.0 L1563.8 720.0 M1660.0 460.0 L1657.5 470.0 L1647.5 487.5 L1637.5 497.5 M1621.2 503.8 L1590.0 505.0 L1575.0 513.8 L1557.5 526.2 L1535.0 528.8 L1505.0 532.5 L1475.0 543.8 L1451.2 547.5 L1440.0 560.0 M1885.0 460.0 L1890.0 467.5 L1898.8 475.0 M1898.8 590.0 L1890.0 612.5 L1883.8 627.5 L1883.8 647.5 L1892.5 660.0 L1898.8 672.5 M1898.8 692.5 L1895.0 685.0 M538.0 720.0 L530.5 731.2 L510.5 750.0 L493.0 767.5 L480.5 782.5 L473.0 800.0 L470.5 820.0 L474.2 847.5 L455.5 865.0 L445.5 880.0 L430.5 885.0 L423.0 900.0 L415.5 925.0 L408.0 945.0 L403.0 950.0 L360.5 951.2 L333.0 966.2 L308.0 980.0 M648.0 723.8 L663.0 727.5 L674.2 737.5 L676.8 752.5 L683.0 770.0 L698.0 782.5 L710.5 791.2 L720.5 795.0 L721.8 786.2 L731.8 785.0 L738.0 790.0 L750.5 792.5 L770.5 795.0 L783.0 801.2 L798.0 805.0 L815.5 802.5 L833.0 795.0 L845.5 782.5 L865.5 770.0 L888.0 760.0 L913.0 755.0 L938.0 750.0 L963.0 743.8 L974.2 737.5 L978.0 727.5 M985.5 727.5 L988.0 737.5 L1000.5 740.0 L1018.0 741.2 M1100.5 720.0 L1108.0 727.5 L1120.5 732.5 L1125.5 745.0 L1138.0 757.5 L1141.8 770.0 L1138.0 785.0 L1140.5 800.0 L1135.5 815.0 L1130.5 830.0 L1138.0 852.5 L1145.5 875.0 L1148.0 895.0 L1150.5 915.0 L1140.5 935.0 L1138.0 952.5 L1133.0 970.0 L1129.2 980.0 M1018.0 741.2 L1030.5 740.0 L1035.5 743.8 M1033.0 742.5 L1048.0 737.5 L1063.0 732.5 L1073.0 720.0 M1155.5 720.0 L1163.0 723.8 L1173.0 723.8 M1563.8 720.0 L1560.0 740.0 L1561.2 762.5 L1550.0 778.8 L1551.2 817.5 L1556.2 827.5 L1540.0 860.0 L1536.2 895.0 L1527.5 901.2 L1522.5 917.5 L1527.5 930.0 L1520.0 947.5 L1513.8 962.5 L1516.2 980.0 M1898.8 753.8 L1882.5 756.2 L1870.0 767.5 L1866.2 785.0 L1865.0 820.0 L1850.0 835.0 L1830.0 850.0 L1800.0 857.5 L1790.0 870.0 L1777.5 882.5 L1760.0 915.0 L1755.0 923.8 L1727.5 927.5 L1712.5 940.0 L1700.0 950.0 L1690.0 965.0 L1686.2 980.0" stroke="#b2b2b2" stroke-width="2"/>
<path d="M196.8 207.5 L178.0 220.0 L179.8 235.0 L177.5 250.0 L183.0 265.0 L186.8 300.0 L183.0 340.0 L175.5 358.8 L168.0 358.8 L160.5 345.0 L120.5 326.2 L93.0 345.0 L91.8 362.5 L98.0 412.5 L104.2 450.0 L103.0 460.0 M975.5 207.5 L984.2 216.2 L974.2 228.8 L988.0 241.2 L1010.5 260.0 L1014.2 275.0 L1008.0 300.0 L1009.2 320.0 L1005.5 340.0 L1004.2 360.0 L1003.0 380.0 L1010.5 405.0 L1018.0 412.5 M1018.0 410.0 L1025.5 412.5 L1033.0 422.5 L1038.0 432.5 L1030.5 442.5 L1025.5 450.0 L1023.0 460.0 M1642.5 230.0 L1630.0 241.2 L1620.0 257.5 L1612.5 271.2 L1595.0 287.5 L1593.8 300.0 L1581.2 322.5 L1570.0 342.5 L1567.5 355.0 L1568.8 385.0 L1585.0 417.5 L1587.5 436.2 L1600.0 445.0 L1612.5 460.0 M1657.5 460.0 L1655.0 450.0 L1665.0 437.5 L1677.5 426.2 L1690.0 425.0 L1695.0 432.5 L1702.5 435.0 L1712.5 431.2 L1725.0 440.0 L1737.5 425.0 L1747.5 412.5 L1762.5 397.5 L1782.5 380.0 L1797.5 371.2 L1807.5 375.0 L1820.0 390.0 L1837.5 397.5 L1845.0 417.5 L1855.0 432.5 L1860.0 455.0 L1870.0 460.0 M104.2 460.0 L99.2 485.0 L95.5 510.0 L93.0 530.0 L103.0 540.0 L115.5 550.0 L121.8 565.0 L120.5 577.5 L108.0 595.0 L96.8 615.0 L89.2 635.0 L80.5 660.0 L65.5 667.5 L58.0 677.5 M535.5 723.0 L533.8 719.0 L537.5 707.5 L540.0 706.7 L548.3 708.0 L558.3 704.6 L564.2 712.5 L567.5 712.5 L570.8 708.3 L572.5 699.0 L573.0 692.0 M1018.0 492.5 L1013.0 502.5 L1005.5 517.5 L998.0 532.5 L998.0 562.5 L988.0 585.0 L985.5 600.0 L988.0 615.0 L980.5 630.0 L983.0 650.0 L989.2 672.5 L985.5 685.0 L980.5 697.5 M593.0 698.8 L603.0 706.2 L613.0 710.0 L628.0 717.5 L648.0 723.8 M1018.0 492.5 L1023.0 477.5 L1028.0 467.5 M1498.0 533.8 L1478.0 541.2 L1453.0 546.2 L1440.5 560.0 L1423.0 570.0 L1408.0 580.0 L1393.0 587.5 L1378.0 596.2 L1363.0 605.0 L1350.5 607.5 L1335.5 603.8 L1318.0 612.5 L1300.5 627.5 L1295.5 621.2 L1278.0 626.2 L1265.5 637.5 L1253.0 650.0 L1243.0 665.0 L1240.5 677.5 L1235.5 687.5 M1073.0 720.0 L1074.2 715.0 L1085.5 713.8 L1118.0 710.0 L1138.0 705.0 L1153.0 706.2 L1155.5 712.5 L1155.5 720.0 M1188.0 715.0 L1208.0 717.5 M1611.2 460.0 L1615.0 475.0 L1620.0 495.0 L1621.2 503.8 L1618.8 525.0 L1615.0 542.5 L1607.5 556.2 L1600.0 576.2 L1585.0 590.0 L1576.2 605.0 L1575.0 635.0 L1572.5 660.0 L1565.0 677.5 L1570.0 690.0 L1565.0 710.0 L1563.8 720.0 M1660.0 460.0 L1657.5 470.0 L1647.5 487.5 L1637.5 497.5 M1621.2 503.8 L1590.0 505.0 L1575.0 513.8 L1557.5 526.2 L1535.0 528.8 L1505.0 532.5 L1475.0 543.8 L1451.2 547.5 L1440.0 560.0 M1885.0 460.0 L1890.0 467.5 L1898.8 475.0 M1898.8 590.0 L1890.0 612.5 L1883.8 627.5 L1883.8 647.5 L1892.5 660.0 L1898.8 672.5 M1898.8 692.5 L1895.0 685.0 M538.0 720.0 L530.5 731.2 L510.5 750.0 L493.0 767.5 L480.5 782.5 L473.0 800.0 L470.5 820.0 L474.2 847.5 L455.5 865.0 L445.5 880.0 L430.5 885.0 L423.0 900.0 L415.5 925.0 L408.0 945.0 L403.0 950.0 L360.5 951.2 L333.0 966.2 L308.0 980.0 M648.0 723.8 L663.0 727.5 L674.2 737.5 L676.8 752.5 L683.0 770.0 L698.0 782.5 L710.5 791.2 L720.5 795.0 L721.8 786.2 L731.8 785.0 L738.0 790.0 L750.5 792.5 L770.5 795.0 L783.0 801.2 L798.0 805.0 L815.5 802.5 L833.0 795.0 L845.5 782.5 L865.5 770.0 L888.0 760.0 L913.0 755.0 L938.0 750.0 L963.0 743.8 L974.2 737.5 L978.0 727.5 M985.5 727.5 L988.0 737.5 L1000.5 740.0 L1018.0 741.2 M1100.5 720.0 L1108.0 727.5 L1120.5 732.5 L1125.5 745.0 L1138.0 757.5 L1141.8 770.0 L1138.0 785.0 L1140.5 800.0 L1135.5 815.0 L1130.5 830.0 L1138.0 852.5 L1145.5 875.0 L1148.0 895.0 L1150.5 915.0 L1140.5 935.0 L1138.0 952.5 L1133.0 970.0 L1129.2 980.0 M1018.0 741.2 L1030.5 740.0 L1035.5 743.8 M1033.0 742.5 L1048.0 737.5 L1063.0 732.5 L1073.0 720.0 M1155.5 720.0 L1163.0 723.8 L1173.0 723.8 M1563.8 720.0 L1560.0 740.0 L1561.2 762.5 L1550.0 778.8 L1551.2 817.5 L1556.2 827.5 L1540.0 860.0 L1536.2 895.0 L1527.5 901.2 L1522.5 917.5 L1527.5 930.0 L1520.0 947.5 L1513.8 962.5 L1516.2 980.0 M1898.8 753.8 L1882.5 756.2 L1870.0 767.5 L1866.2 785.0 L1865.0 820.0 L1850.0 835.0 L1830.0 850.0 L1800.0 857.5 L1790.0 870.0 L1777.5 882.5 L1760.0 915.0 L1755.0 923.8 L1727.5 927.5 L1712.5 940.0 L1700.0 950.0 L1690.0 965.0 L1686.2 980.0" stroke="#f8f7f5" stroke-width="0.900"/>
<path d="M196.8 207.5 L178.0 220.0 L179.8 235.0 L177.5 250.0 L183.0 265.0 L186.8 300.0 L183.0 340.0 L175.5 358.8 L168.0 358.8 L160.5 345.0 L120.5 326.2 L93.0 345.0 L91.8 362.5 L98.0 412.5 L104.2 450.0 L103.0 460.0 M975.5 207.5 L984.2 216.2 L974.2 228.8 L988.0 241.2 L1010.5 260.0 L1014.2 275.0 L1008.0 300.0 L1009.2 320.0 L1005.5 340.0 L1004.2 360.0 L1003.0 380.0 L1010.5 405.0 L1018.0 412.5 M1018.0 410.0 L1025.5 412.5 L1033.0 422.5 L1038.0 432.5 L1030.5 442.5 L1025.5 450.0 L1023.0 460.0 M1642.5 230.0 L1630.0 241.2 L1620.0 257.5 L1612.5 271.2 L1595.0 287.5 L1593.8 300.0 L1581.2 322.5 L1570.0 342.5 L1567.5 355.0 L1568.8 385.0 L1585.0 417.5 L1587.5 436.2 L1600.0 445.0 L1612.5 460.0 M1657.5 460.0 L1655.0 450.0 L1665.0 437.5 L1677.5 426.2 L1690.0 425.0 L1695.0 432.5 L1702.5 435.0 L1712.5 431.2 L1725.0 440.0 L1737.5 425.0 L1747.5 412.5 L1762.5 397.5 L1782.5 380.0 L1797.5 371.2 L1807.5 375.0 L1820.0 390.0 L1837.5 397.5 L1845.0 417.5 L1855.0 432.5 L1860.0 455.0 L1870.0 460.0 M104.2 460.0 L99.2 485.0 L95.5 510.0 L93.0 530.0 L103.0 540.0 L115.5 550.0 L121.8 565.0 L120.5 577.5 L108.0 595.0 L96.8 615.0 L89.2 635.0 L80.5 660.0 L65.5 667.5 L58.0 677.5 M535.5 723.0 L533.8 719.0 L537.5 707.5 L540.0 706.7 L548.3 708.0 L558.3 704.6 L564.2 712.5 L567.5 712.5 L570.8 708.3 L572.5 699.0 L573.0 692.0 M1018.0 492.5 L1013.0 502.5 L1005.5 517.5 L998.0 532.5 L998.0 562.5 L988.0 585.0 L985.5 600.0 L988.0 615.0 L980.5 630.0 L983.0 650.0 L989.2 672.5 L985.5 685.0 L980.5 697.5 M593.0 698.8 L603.0 706.2 L613.0 710.0 L628.0 717.5 L648.0 723.8 M1018.0 492.5 L1023.0 477.5 L1028.0 467.5 M1498.0 533.8 L1478.0 541.2 L1453.0 546.2 L1440.5 560.0 L1423.0 570.0 L1408.0 580.0 L1393.0 587.5 L1378.0 596.2 L1363.0 605.0 L1350.5 607.5 L1335.5 603.8 L1318.0 612.5 L1300.5 627.5 L1295.5 621.2 L1278.0 626.2 L1265.5 637.5 L1253.0 650.0 L1243.0 665.0 L1240.5 677.5 L1235.5 687.5 M1073.0 720.0 L1074.2 715.0 L1085.5 713.8 L1118.0 710.0 L1138.0 705.0 L1153.0 706.2 L1155.5 712.5 L1155.5 720.0 M1188.0 715.0 L1208.0 717.5 M1611.2 460.0 L1615.0 475.0 L1620.0 495.0 L1621.2 503.8 L1618.8 525.0 L1615.0 542.5 L1607.5 556.2 L1600.0 576.2 L1585.0 590.0 L1576.2 605.0 L1575.0 635.0 L1572.5 660.0 L1565.0 677.5 L1570.0 690.0 L1565.0 710.0 L1563.8 720.0 M1660.0 460.0 L1657.5 470.0 L1647.5 487.5 L1637.5 497.5 M1621.2 503.8 L1590.0 505.0 L1575.0 513.8 L1557.5 526.2 L1535.0 528.8 L1505.0 532.5 L1475.0 543.8 L1451.2 547.5 L1440.0 560.0 M1885.0 460.0 L1890.0 467.5 L1898.8 475.0 M1898.8 590.0 L1890.0 612.5 L1883.8 627.5 L1883.8 647.5 L1892.5 660.0 L1898.8 672.5 M1898.8 692.5 L1895.0 685.0 M538.0 720.0 L530.5 731.2 L510.5 750.0 L493.0 767.5 L480.5 782.5 L473.0 800.0 L470.5 820.0 L474.2 847.5 L455.5 865.0 L445.5 880.0 L430.5 885.0 L423.0 900.0 L415.5 925.0 L408.0 945.0 L403.0 950.0 L360.5 951.2 L333.0 966.2 L308.0 980.0 M648.0 723.8 L663.0 727.5 L674.2 737.5 L676.8 752.5 L683.0 770.0 L698.0 782.5 L710.5 791.2 L720.5 795.0 L721.8 786.2 L731.8 785.0 L738.0 790.0 L750.5 792.5 L770.5 795.0 L783.0 801.2 L798.0 805.0 L815.5 802.5 L833.0 795.0 L845.5 782.5 L865.5 770.0 L888.0 760.0 L913.0 755.0 L938.0 750.0 L963.0 743.8 L974.2 737.5 L978.0 727.5 M985.5 727.5 L988.0 737.5 L1000.5 740.0 L1018.0 741.2 M1100.5 720.0 L1108.0 727.5 L1120.5 732.5 L1125.5 745.0 L1138.0 757.5 L1141.8 770.0 L1138.0 785.0 L1140.5 800.0 L1135.5 815.0 L1130.5 830.0 L1138.0 852.5 L1145.5 875.0 L1148.0 895.0 L1150.5 915.0 L1140.5 935.0 L1138.0 952.5 L1133.0 970.0 L1129.2 980.0 M1018.0 741.2 L1030.5 740.0 L1035.5 743.8 M1033.0 742.5 L1048.0 737.5 L1063.0 732.5 L1073.0 720.0 M1155.5 720.0 L1163.0 723.8 L1173.0 723.8 M1563.8 720.0 L1560.0 740.0 L1561.2 762.5 L1550.0 778.8 L1551.2 817.5 L1556.2 827.5 L1540.0 860.0 L1536.2 895.0 L1527.5 901.2 L1522.5 917.5 L1527.5 930.0 L1520.0 947.5 L1513.8 962.5 L1516.2 980.0 M1898.8 753.8 L1882.5 756.2 L1870.0 767.5 L1866.2 785.0 L1865.0 820.0 L1850.0 835.0 L1830.0 850.0 L1800.0 857.5 L1790.0 870.0 L1777.5 882.5 L1760.0 915.0 L1755.0 923.8 L1727.5 927.5 L1712.5 940.0 L1700.0 950.0 L1690.0 965.0 L1686.2 980.0" stroke="#909090" stroke-width="0.900" stroke-dasharray="3.500 5.500"/>
<path d="M508.0 335.0 L523.0 330.0 L530.5 342.5 L538.0 345.0 M538.0 357.5 L530.5 360.0 L531.8 365.0 L538.0 366.2 M528.0 391.2 L510.5 393.8 L520.5 400.0 L528.0 412.5 L538.0 420.0 M538.0 345.0 L541.8 350.0 L538.0 360.0 M543.0 423.8 L555.5 428.8 L563.0 437.5 L578.0 435.0 L598.0 426.2 L623.0 422.5 L633.0 410.0 L641.8 400.0 L643.0 390.0 L655.5 382.5 L680.5 390.0 L683.0 402.5 L698.0 403.8 L701.8 417.5 L693.0 430.0 L698.0 442.5 L708.0 445.0 L700.5 450.0 L703.0 460.0 M835.5 236.2 L830.5 252.5 L821.8 257.5 L823.0 271.2 L808.0 270.0 L803.0 272.5 M784.2 272.5 L781.8 286.2 L769.2 288.8 L765.5 305.0 L773.0 310.0 L774.2 322.5 L773.0 335.0 L784.2 342.5 L799.2 331.2 L809.2 337.5 L811.8 347.5 L820.5 350.0 L815.5 365.0 L820.5 377.5 L833.0 372.5 L841.8 378.8 L865.5 367.5 L880.5 372.5 L893.0 385.0 L898.0 397.5 L891.8 400.0 L905.5 412.5 L903.0 425.0 L910.5 440.0 L898.0 447.5 L885.5 456.2 L858.0 453.8 L845.5 460.0 M715.5 457.5 L735.5 453.8 L750.5 457.5 M835.5 236.2 L845.5 242.5 L858.0 252.5 L865.5 262.5 L875.5 263.8 L883.0 277.5 L900.5 285.0 L905.5 293.8 L913.0 298.8 L916.8 292.5 L915.5 286.2 L908.0 282.5 L909.2 272.5 L901.8 256.2 L894.2 232.5 L890.5 222.5 L894.2 216.2 L886.8 208.8 M916.8 286.2 L918.0 280.0 L930.5 277.5 L938.0 286.2 L943.0 275.0 L935.5 272.5 M945.5 255.0 L940.5 242.5 L933.0 235.0 L930.5 222.5 L938.0 223.8 L950.5 235.0 L960.5 252.5 L969.2 258.8 L963.0 265.0 L963.0 280.0 L953.0 290.0 L954.2 296.2 L965.5 293.8 L980.5 302.5 L988.0 301.2 L985.5 285.0 L995.5 267.5 L1008.0 265.0 L1011.8 266.2 M1018.0 227.5 L1008.0 232.5 L1004.2 238.8 L1010.5 250.0 L1018.0 252.5 M1018.0 226.2 L1026.8 233.8 L1035.5 232.5 L1035.5 216.2 L1045.5 211.2 L1058.0 207.5 M1078.0 211.2 L1080.5 227.5 L1086.8 235.0 L1103.0 225.0 L1114.2 215.0 L1118.0 207.5 M1333.0 265.0 L1344.2 258.8 L1356.8 262.5 L1354.2 277.5 L1348.0 287.5 L1348.0 302.5 L1354.2 311.2 L1346.8 320.0 L1348.0 327.5 L1355.5 332.5 L1365.5 327.5 L1363.0 320.0 L1369.2 312.5 L1363.0 305.0 L1360.5 298.8 L1371.8 293.8 L1378.0 305.0 L1385.5 310.0 L1386.8 325.0 L1381.8 337.5 L1375.5 345.0 L1381.8 360.0 L1388.0 355.0 L1395.5 350.0 L1400.5 358.8 L1413.0 356.2 L1428.0 367.5 L1434.2 356.2 L1448.0 360.0 L1446.8 352.5 L1458.0 325.0 L1460.5 310.0 L1453.0 300.0 M1475.0 212.5 L1477.5 230.0 L1487.5 240.0 L1482.5 253.8 L1467.5 262.5 L1467.5 268.8 L1485.0 265.0 L1490.0 275.0 L1482.5 287.5 L1482.5 300.0 L1477.5 312.5 L1485.0 322.5 L1482.5 335.0 L1487.5 342.5 L1497.5 338.8 L1506.2 343.8 M1458.8 317.5 L1452.5 337.5 L1445.0 350.0 L1447.5 362.5 M1497.5 338.8 L1501.2 350.0 L1496.2 362.5 L1496.2 375.0 L1488.8 387.5 L1488.8 397.5 L1502.5 395.0 L1493.8 392.5 M1497.5 405.0 L1488.8 412.5 L1490.0 425.0 L1496.2 437.5 L1495.0 450.0 L1500.0 460.0 M375.5 622.5 L374.2 610.0 L378.0 600.0 L390.5 595.0 L398.0 585.0 L408.0 572.5 L425.5 555.0 L430.5 545.0 L435.5 530.0 L439.2 526.2 L453.0 530.0 L455.5 540.0 L468.0 550.0 L478.0 553.8 L485.5 565.0 L500.5 557.5 L508.0 537.5 L518.0 530.0 L520.5 521.2 L528.0 522.5 L538.0 532.5 M405.5 716.2 L413.0 720.0 M463.0 720.0 L468.0 707.5 L478.0 701.2 L498.0 706.2 M705.5 460.0 L706.8 468.8 L708.0 475.0 L705.5 487.5 L695.5 497.5 L694.2 507.5 L696.8 510.0 L693.0 521.2 L691.8 531.2 L686.8 540.0 L680.5 535.0 L663.0 532.5 L655.5 536.2 L633.0 550.0 L620.5 558.8 L618.0 551.2 L610.5 547.5 L600.5 555.0 L595.5 548.8 L585.5 550.0 L573.0 555.0 L563.0 555.0 L555.5 550.0 L550.5 537.5 L543.0 532.5 L538.0 532.5 M498.0 706.2 L506.7 703.8 L512.5 708.3 L520.8 705.8 L525.8 699.0 L528.3 687.5 L531.7 686.2 L539.2 695.0 L542.5 700.4 L541.7 707.5 L542.5 711.7 L545.8 715.4 L550.0 713.3 L561.7 713.3 L564.2 720.0 L563.0 722.5 M1460.5 525.0 L1453.0 532.5 L1451.8 545.0 L1443.0 552.5 L1438.0 560.0 M1388.0 602.5 L1398.0 612.5 L1408.0 622.5 L1418.0 620.0 L1420.5 612.5 L1430.5 607.5 L1443.0 598.8 L1453.0 598.8 L1450.5 607.5 L1455.5 608.8 L1463.0 605.0 L1473.0 600.0 L1476.8 592.5 L1485.5 595.0 L1498.0 593.8 M1400.5 600.0 L1408.0 598.8 L1413.0 587.5 M1500.0 460.0 L1515.0 467.5 L1521.2 475.0 L1520.0 492.5 L1512.5 501.2 L1501.2 506.2 M1440.0 600.0 L1452.5 597.5 L1450.0 608.8 L1461.2 607.5 L1470.0 600.0 L1477.5 591.2 L1490.0 593.8 L1505.0 590.0 L1512.5 592.5 L1520.0 605.0 L1525.0 610.0 L1530.0 612.5 L1536.2 630.0 L1532.5 638.8 L1522.5 640.0 L1517.5 650.0 L1527.5 650.0 L1526.2 662.5 L1531.2 672.5 L1535.0 682.5 L1545.0 676.2 L1540.0 672.5 M1503.8 682.5 L1515.0 676.2 L1525.0 675.0 L1535.0 682.5 M1490.0 697.5 L1500.0 702.5 L1506.2 715.0 L1506.2 720.0 M58.0 821.2 L65.5 821.2 L73.0 827.5 M413.0 720.0 L420.5 727.5 L430.5 730.0 L458.0 727.5 L464.2 720.0 M538.0 850.0 L533.0 860.0 L535.5 870.0 L530.5 885.0 L525.5 892.5 L515.5 895.0 L513.0 910.0 L515.5 925.0 L528.0 930.0 L538.0 937.5 M538.0 945.0 L535.5 952.5 M563.0 722.5 L570.5 730.0 L575.5 740.0 L583.0 747.5 L584.2 761.2 L573.0 770.0 L560.5 780.0 L556.8 795.0 L553.0 807.5 L554.2 820.0 L544.2 825.0 L541.8 837.5 L538.0 850.0 M538.0 952.5 L543.0 946.2 L559.2 943.8 L556.8 957.5 L556.8 967.5 L565.5 970.0 L575.5 977.5 M1498.0 745.0 L1493.0 751.2 L1490.5 762.5 L1485.5 770.0 L1490.5 777.5 L1498.0 782.5 M1498.0 876.2 L1491.8 890.0 L1498.0 895.0 M1498.0 898.8 L1488.0 902.5 L1480.5 901.2 L1470.5 898.8 L1468.0 890.0 L1463.0 883.8 L1450.5 882.5 L1440.5 887.5 L1443.0 895.0 L1443.0 910.0 L1438.0 922.5 L1443.0 935.0 L1435.5 945.0 L1420.5 941.2 L1410.5 937.5 L1393.0 940.0 L1385.5 927.5 L1380.5 920.0 L1368.0 922.5 L1368.0 932.5 L1363.0 940.0 L1368.0 945.0 L1355.5 950.0 L1353.0 960.0 L1360.5 966.2 L1353.0 972.5 L1343.0 970.0 L1333.0 960.0 L1318.0 961.2 L1315.5 953.8 L1305.5 950.0 L1301.8 941.2 L1293.0 946.2 L1288.0 957.5 L1278.0 963.8 L1273.0 957.5 L1265.5 963.8 L1265.5 973.8 L1261.8 980.0 M1410.5 900.0 L1413.0 908.8 L1423.0 905.0 M1018.0 940.0 L1030.5 938.8 L1053.0 935.0 L1070.5 933.8 L1079.2 926.2 L1085.5 928.8 L1085.5 937.5 L1098.0 947.5 L1104.2 955.0 L1100.5 963.8 L1110.5 970.0 L1120.5 980.0 M1043.0 947.5 L1038.0 960.0 L1033.0 966.2 L1035.5 977.5 M1508.8 720.0 L1503.8 730.0 L1505.0 737.5 L1493.8 747.5 L1488.8 760.0 L1483.8 770.0 L1496.2 782.5 L1512.5 778.8 L1521.2 773.8 L1515.0 785.0 L1518.8 797.5 L1528.8 812.5 L1527.5 820.0 L1517.5 822.5 L1522.5 832.5 L1532.5 841.2 L1550.0 831.2 L1556.2 827.5 M1522.5 832.5 L1520.0 842.5 L1510.0 848.8 L1510.0 862.5 L1497.5 875.0 L1493.8 890.0 L1492.5 900.0 L1480.0 902.5 L1468.8 895.0 L1462.5 883.8 L1450.0 882.5 L1440.0 887.5 M1440.0 905.0 L1443.8 910.0 L1440.0 915.0 M1440.0 935.0 L1445.0 940.0 M1556.2 827.5 L1562.5 837.5 L1571.2 842.5 L1570.0 850.0 L1562.5 857.5 L1562.5 865.0 L1575.0 866.2 L1582.5 870.0 L1591.2 860.0 L1587.5 850.0 L1582.5 842.5 L1587.5 832.5 L1600.0 833.8 L1605.0 820.0 L1607.5 807.5 L1618.8 798.8 L1627.5 802.5 L1637.5 805.0 L1643.8 810.0 L1640.0 822.5 L1637.5 830.0 L1647.5 836.2 L1655.0 837.5 L1663.8 827.5 L1672.5 835.0 L1676.2 848.8 L1687.5 846.2 L1695.0 837.5 L1698.8 820.0 L1708.8 810.0 L1723.8 798.8 L1731.2 790.0 L1733.8 780.0 L1746.2 768.8 L1751.2 773.8 L1762.5 772.5 L1770.0 771.2 L1773.8 786.2 L1787.5 786.2 L1800.0 781.2 L1806.2 786.2 L1810.0 760.0 L1816.2 757.5 L1822.5 766.2 L1830.0 771.2 L1845.0 775.0 L1865.0 775.0 L1862.5 781.2 L1872.5 783.8 L1877.5 790.0 L1872.5 797.5 L1873.8 815.0 L1870.0 827.5 L1862.5 837.5 L1860.0 847.5 M1865.0 862.5 L1872.5 871.2 L1877.5 870.0 L1882.5 863.8 L1892.5 862.5 L1898.8 866.2 M1898.8 897.5 L1883.8 898.8 L1881.2 907.5 L1883.8 920.0 L1887.5 926.2 L1883.8 935.0 L1882.5 950.0 M340.5 460.0 L353.0 440.0 L354.2 420.0 L364.2 411.2 L353.0 410.0 L349.2 397.5 L340.5 392.5 L344.2 377.5 L363.0 360.0 L366.8 352.5 L380.5 345.0 L393.0 360.0 L413.0 347.5 L425.5 335.0 L421.8 315.0 L409.2 288.8 L413.0 277.5 L419.2 270.0 L421.8 257.5 L425.5 257.5 L428.0 265.5 L440.5 267.5 L448.0 272.5 L473.0 262.5 L495.5 260.0 L499.2 257.5 L503.0 262.5 L511.8 267.5 L524.2 261.2 L538.0 262.5 M538.0 265.5 L526.8 272.5 L518.0 280.0 L500.5 286.2 L501.8 305.0 L505.5 330.0 M1304.2 207.5 L1301.8 218.8 L1309.2 227.5 L1301.8 243.8 L1299.2 252.5 L1313.0 258.8 L1333.0 265.0 M340.5 460.0 L328.0 472.5 L310.5 485.0 L313.0 497.5 L299.2 500.0 L289.2 515.0 L284.2 525.0 L283.0 532.5 L275.5 536.2 L266.8 533.8 L253.0 542.5 L248.0 540.0 L244.2 532.5 L238.0 542.5 L233.0 560.0 L236.8 585.0 L235.5 605.0 L230.5 617.5 L234.2 625.0 L234.2 640.0 L250.5 662.5 L253.0 672.5 L258.0 695.0 L263.0 712.5 L265.5 720.0 M388.0 612.5 L394.2 615.0 L405.5 635.0 L406.8 652.5 L395.5 657.5 L393.0 667.5 L399.2 682.5 L404.2 685.0 L404.2 710.0 L398.0 717.5 L396.8 720.0 M750.5 460.0 L755.5 465.0 L763.0 467.5 L771.8 480.0 L778.0 475.0 L788.0 472.5 L790.5 467.5 L803.0 467.5 L813.0 466.2 L820.5 460.0 M820.5 460.0 L833.0 462.5 L845.5 460.0 M265.5 720.0 L266.8 730.0 L255.5 736.2 L253.0 752.5 L253.0 765.0 L235.5 767.5 L230.5 762.5 L223.0 772.5 L208.0 778.8 L201.8 793.8 L194.2 795.0 L178.0 786.2 L178.0 780.0 L183.0 773.8 L180.5 766.2 L169.2 762.5 L163.0 768.8 L140.5 776.2 L130.5 782.5 L120.5 791.2 L108.0 795.0 L105.5 802.5 L95.5 807.5 L90.5 816.2 L79.2 825.0 L78.0 827.5" stroke="#2c2c2c" stroke-width="1.300" stroke-dasharray="5.500 3.300 1.400 3.300"/>
<g clip-path="url(#cb)">
<path d="M174.7 948.3 L168.0 960.0 L164.7 973.3 L156.3 985.0 M311.3 945.0 L304.7 956.7 L303.0 973.3 L298.0 986.7 L293.0 995.0 M241.3 986.7 L239.7 993.3 L231.3 996.7 L228.0 1006.7 M421.3 953.3 L424.7 973.3 L423.0 990.0 L431.3 1003.3 M968.0 1020.0 L981.3 1016.7 L1018.0 1015.0 L1023.0 1001.7 L1031.3 1005.0 L1033.0 1020.0 M1522.7 940.0 L1512.7 961.7 L1514.3 976.7 L1507.7 990.0 L1506.0 1010.0 L1497.7 1020.0" stroke="#98b8de" stroke-width="1.500"/>
<path d="M334.7 963.3 L311.3 976.7 L288.0 993.3 L271.3 1005.0 M591.3 1006.7 L593.0 998.3 L604.7 993.3 L621.3 996.7 L631.3 1006.7 M1141.3 940.0 L1133.0 956.7 L1128.0 980.0 L1133.0 996.7 L1134.7 1011.7 L1144.7 1020.0 M1525.0 940.0 L1515.0 961.7 L1516.7 976.7 L1510.0 990.0 L1508.3 1010.0 L1500.0 1020.0 M1713.3 940.0 L1700.0 953.3 L1688.3 970.0 L1683.3 986.7 L1676.7 1000.0 L1663.3 1013.3 L1650.0 1020.0" stroke="#b2b2b2" stroke-width="2"/>
<path d="M334.7 963.3 L311.3 976.7 L288.0 993.3 L271.3 1005.0 M591.3 1006.7 L593.0 998.3 L604.7 993.3 L621.3 996.7 L631.3 1006.7 M1141.3 940.0 L1133.0 956.7 L1128.0 980.0 L1133.0 996.7 L1134.7 1011.7 L1144.7 1020.0 M1525.0 940.0 L1515.0 961.7 L1516.7 976.7 L1510.0 990.0 L1508.3 1010.0 L1500.0 1020.0 M1713.3 940.0 L1700.0 953.3 L1688.3 970.0 L1683.3 986.7 L1676.7 1000.0 L1663.3 1013.3 L1650.0 1020.0" stroke="#f8f7f5" stroke-width="0.900"/>
<path d="M334.7 963.3 L311.3 976.7 L288.0 993.3 L271.3 1005.0 M591.3 1006.7 L593.0 998.3 L604.7 993.3 L621.3 996.7 L631.3 1006.7 M1141.3 940.0 L1133.0 956.7 L1128.0 980.0 L1133.0 996.7 L1134.7 1011.7 L1144.7 1020.0 M1525.0 940.0 L1515.0 961.7 L1516.7 976.7 L1510.0 990.0 L1508.3 1010.0 L1500.0 1020.0 M1713.3 940.0 L1700.0 953.3 L1688.3 970.0 L1683.3 986.7 L1676.7 1000.0 L1663.3 1013.3 L1650.0 1020.0" stroke="#909090" stroke-width="0.900" stroke-dasharray="3.500 5.500"/>
<path d="M534.7 941.7 L533.0 950.0 L538.0 955.0 L539.7 950.0 L554.7 948.3 L558.0 943.3 M558.0 953.3 L556.3 966.7 L564.7 971.7 L574.7 980.0 L578.0 993.3 L591.3 995.0 M1051.3 940.0 L1041.3 950.0 L1033.0 963.3 L1041.3 983.3 L1039.7 996.7 L1031.3 1006.7 L1018.0 1015.0 L991.3 1020.0 L971.3 1020.0 M1088.0 940.0 L1101.3 950.0 L1103.0 963.3 L1098.0 968.3 L1118.0 973.3 L1121.3 983.3 L1131.3 993.3 L1129.7 1006.7 L1138.0 1011.7 L1151.3 1001.7 L1159.7 1000.0 L1166.3 988.3 L1168.0 1003.3 L1178.0 1010.0 L1184.7 1005.0 L1188.0 1018.3 M1224.7 1020.0 L1238.0 1015.0 L1254.7 1011.7 L1263.0 996.7 L1263.0 980.0 L1266.3 961.7 L1281.3 960.0 L1294.7 943.3 L1304.7 940.0 M1304.7 943.3 L1314.7 956.7 L1324.7 958.3 L1334.7 965.0 M1280.0 963.3 L1286.7 950.0 L1300.0 943.3 L1313.3 953.3 L1330.0 960.0 L1340.0 973.3 L1353.3 980.0 L1355.0 990.0 M1355.0 963.3 L1351.7 953.3 L1360.0 943.3 L1370.0 941.7 M1823.3 1020.0 L1840.0 1013.3" stroke="#2c2c2c" stroke-width="1.300" stroke-dasharray="5.500 3.300 1.400 3.300"/>
</g>
<path d="M1845 337.500L1826.200 343.800L1825 350L1822.500 360L1813.800 366.200" stroke="#98b8de" stroke-width="3"/>
</svg>
<i class="mk" style="left:98.5px;top:54.5px"></i>
<div class="lb" style="left:102.8px;top:51.6px">越西县</div>
<i class="mk" style="left:34.2px;top:75.5px"></i>
<div class="lb" style="left:38.5px;top:72.6px">冕宁县</div>
<i class="mk" style="left:221.0px;top:124.2px"></i>
<div class="lb" style="left:225.3px;top:121.4px">美姑县</div>
<i class="mk" style="left:164.8px;top:193.2px"></i>
<div class="lb" style="left:169.1px;top:190.3px">昭觉县</div>
<i class="mk" style="left:51.8px;top:219.5px"></i>
<div class="lb" style="left:43.2px;top:209.5px">西昌</div>
<i class="mk" style="left:382.2px;top:63.8px"></i>
<div class="lb" style="left:386.6px;top:60.9px">绥江县</div>
<i class="mk" style="left:320.5px;top:145.5px"></i>
<div class="lb" style="left:324.8px;top:142.6px">永善县</div>
<i class="mk" style="left:436.5px;top:172.5px"></i>
<div class="lb" style="left:440.8px;top:169.6px">盐津县</div>
<i class="mk" style="left:459.2px;top:13.5px"></i>
<div class="lb" style="left:463.6px;top:10.6px">屏山县</div>
<i class="mk" style="left:581.0px;top:9.2px"></i>
<div class="lb" style="left:585.3px;top:6.4px">南溪区</div>
<i class="mk r" style="left:674.0px;top:3.5px"></i>
<div class="lb cb" style="left:678.5px;top:-3.3px">泸州</div>
<i class="mk" style="left:659.8px;top:25.0px"></i>
<div class="lb" style="left:664.0px;top:22.1px">纳溪区</div>
<i class="mk r" style="left:517.2px;top:30.5px"></i>
<div class="lb cb" style="left:521.8px;top:23.7px">宜宾</div>
<i class="mk" style="left:495.5px;top:44.2px"></i>
<div class="lb" style="left:499.8px;top:41.4px">宜宾县</div>
<i class="mk" style="left:473.0px;top:57.5px"></i>
<div class="lb" style="left:477.3px;top:54.6px">水富县</div>
<i class="mk" style="left:572.2px;top:67.0px"></i>
<div class="lb" style="left:576.5px;top:64.1px">长宁县</div>
<i class="mk" style="left:493.0px;top:100.0px"></i>
<div class="lb" style="left:497.3px;top:97.1px">高县</div>
<i class="mk" style="left:633.0px;top:129.5px"></i>
<div class="lb" style="left:637.3px;top:126.6px">兴文县</div>
<i class="mk" style="left:491.0px;top:160.0px"></i>
<div class="lb" style="left:495.3px;top:157.1px">筠连县</div>
<i class="mk" style="left:674.8px;top:162.0px"></i>
<div class="lb" style="left:679.0px;top:159.1px">叙永县</div>
<i class="mk" style="left:597.2px;top:230.5px"></i>
<div class="lb" style="left:601.5px;top:227.6px">威信县</div>
<i class="mk" style="left:723.5px;top:65.5px"></i>
<div class="lb" style="left:727.8px;top:62.6px">赤水</div>
<i class="mk" style="left:821.5px;top:123.0px"></i>
<div class="lb" style="left:825.8px;top:120.1px">习水县</div>
<i class="mk" style="left:861.8px;top:242.0px"></i>
<div class="lb" style="left:866.0px;top:239.1px">仁怀</div>
<i class="mk" style="left:944.8px;top:167.5px"></i>
<div class="lb" style="left:949.0px;top:164.6px">桐梓县</div>
<i class="mk" style="left:1098.5px;top:5.5px"></i>
<div class="lb ml" style="left:1102.8px;top:-2.6px">道真仡佬族<br>苗族自治县</div>
<i class="mk" style="left:1324.0px;top:10.5px"></i>
<div class="lb ml" style="left:1328.3px;top:2.4px">酉阳土家族<br>苗族自治县</div>
<i class="mk" style="left:1067.2px;top:74.5px"></i>
<div class="lb" style="left:1071.5px;top:71.6px">正安县</div>
<i class="mk" style="left:1154.2px;top:72.0px"></i>
<div class="lb ml" style="left:1158.5px;top:63.9px">务川仡佬族<br>苗族自治县</div>
<i class="mk" style="left:1273.0px;top:72.0px"></i>
<div class="lb" style="left:1277.3px;top:69.1px">沿河土家族自治县</div>
<i class="mk" style="left:1371.0px;top:98.0px"></i>
<div class="lb ml" style="left:1375.3px;top:89.9px">秀山土家族<br>苗族自治县</div>
<i class="mk" style="left:1197.2px;top:138.2px"></i>
<div class="lb" style="left:1201.5px;top:135.3px">德江县</div>
<i class="mk" style="left:1015.5px;top:208.0px"></i>
<div class="lb" style="left:1019.8px;top:205.1px">绥阳县</div>
<i class="mk" style="left:1119.2px;top:207.0px"></i>
<div class="lb" style="left:1123.5px;top:204.1px">凤冈县</div>
<i class="mk" style="left:1254.0px;top:198.0px"></i>
<div class="lb ml" style="left:1258.3px;top:189.9px">印江土家族<br>苗族自治县</div>
<i class="mk" style="left:1069.8px;top:250.8px"></i>
<div class="lb" style="left:1074.0px;top:247.8px">湄潭县</div>
<i class="mk" style="left:1498.8px;top:41.2px"></i>
<div class="lb" style="left:1503.0px;top:38.4px">保靖县</div>
<i class="mk" style="left:1555.5px;top:60.0px"></i>
<div class="lb" style="left:1559.8px;top:57.1px">古丈县</div>
<i class="mk" style="left:1643.0px;top:96.2px"></i>
<div class="lb" style="left:1647.3px;top:93.4px">沅陵县</div>
<i class="mk" style="left:1608.5px;top:148.8px"></i>
<div class="lb" style="left:1612.8px;top:145.8px">泸溪县</div>
<i class="mk" style="left:1496.0px;top:161.2px"></i>
<div class="lb" style="left:1500.3px;top:158.3px">吉首</div>
<i class="mk" style="left:1601.2px;top:195.5px"></i>
<div class="lb" style="left:1605.5px;top:192.6px">辰溪县</div>
<i class="mk" style="left:1486.8px;top:208.0px"></i>
<div class="lb" style="left:1491.0px;top:205.1px">凤凰县</div>
<i class="mk" style="left:1526.2px;top:226.2px"></i>
<div class="lb" style="left:1530.5px;top:223.3px">麻阳苗族自治县</div>
<div class="lb pb" style="left:1442.0px;top:7.7px;width:120px">湘西土家族<br>苗族自治州</div>
<i class="mk" style="left:158.5px;top:261.2px"></i>
<div class="lb" style="left:162.8px;top:258.3px">布拖县</div>
<i class="mk" style="left:244.0px;top:263.8px"></i>
<div class="lb" style="left:248.3px;top:260.8px">金阳县</div>
<i class="mk" style="left:400.5px;top:279.5px"></i>
<div class="lb" style="left:404.8px;top:276.6px">彝良县</div>
<i class="mk" style="left:35.5px;top:328.0px"></i>
<div class="lb" style="left:39.8px;top:325.1px">德昌县</div>
<i class="mk" style="left:106.0px;top:334.2px"></i>
<div class="lb" style="left:110.3px;top:331.3px">普格县</div>
<i class="mk" style="left:148.0px;top:403.2px"></i>
<div class="lb" style="left:152.3px;top:400.3px">宁南县</div>
<i class="mk" style="left:182.2px;top:435.8px"></i>
<div class="lb" style="left:186.6px;top:432.8px">巧家县</div>
<i class="mk" style="left:22.2px;top:440.0px"></i>
<div class="lb" style="left:26.6px;top:437.1px">米易县</div>
<i class="mk" style="left:48.0px;top:491.2px"></i>
<div class="lb" style="left:52.3px;top:488.3px">会理县</div>
<i class="mk" style="left:113.0px;top:495.8px"></i>
<div class="lb" style="left:117.3px;top:492.8px">会东县</div>
<i class="mk" style="left:439.8px;top:444.2px"></i>
<div class="lb ml" style="left:444.1px;top:436.1px">威宁彝族回<br>族苗族自治县</div>
<i class="mk" style="left:370.2px;top:253.2px"></i>
<div class="lb" style="left:374.6px;top:250.3px">大关县</div>
<div class="lb pb" style="left:-91.0px;top:256.6px;width:120px">凉山彝族自治州</div>
<i class="mk" style="left:-29.5px;top:485.0px"></i>
<div class="lb" style="left:-25.2px;top:482.1px">盐边县</div>
<i class="mk" style="left:562.2px;top:319.5px"></i>
<div class="lb" style="left:566.5px;top:316.6px">镇雄县</div>
<i class="mk r" style="left:643.5px;top:353.0px"></i>
<div class="lb cb" style="left:648.0px;top:346.2px">毕节</div>
<i class="mk" style="left:825.5px;top:315.5px"></i>
<div class="lb" style="left:829.8px;top:312.6px">金沙县</div>
<i class="mk" style="left:707.5px;top:384.8px"></i>
<div class="lb" style="left:711.8px;top:381.8px">大方县</div>
<i class="mk" style="left:788.0px;top:413.8px"></i>
<div class="lb" style="left:792.3px;top:410.8px">黔西县</div>
<i class="mk" style="left:927.5px;top:395.8px"></i>
<div class="lb" style="left:931.8px;top:392.8px">息烽县</div>
<i class="mk" style="left:946.0px;top:298.8px"></i>
<div class="lb" style="left:950.3px;top:295.8px">播州区</div>
<i class="mk" style="left:898.5px;top:451.2px"></i>
<div class="lb" style="left:902.8px;top:448.3px">修文县</div>
<i class="mk" style="left:661.0px;top:464.5px"></i>
<div class="lb" style="left:665.3px;top:461.6px">纳雍县</div>
<i class="mk" style="left:737.5px;top:488.8px"></i>
<div class="lb" style="left:741.8px;top:485.8px">织金县</div>
<i class="mk r" style="left:554.5px;top:503.8px"></i>
<div class="lb cb" style="left:559.0px;top:496.9px">六盘水</div>
<i class="mk" style="left:876.0px;top:511.5px"></i>
<div class="lb" style="left:880.3px;top:508.6px">清镇</div>
<i class="mk" style="left:911.5px;top:510.0px"></i>
<div class="lb" style="left:915.8px;top:507.1px">观山湖区</div>
<i class="mk r" style="left:965.5px;top:257.0px"></i>
<div class="lb cb" style="left:970.0px;top:250.2px">遵义</div>
<i class="mk" style="left:958.5px;top:274.2px"></i>
<div class="lb" style="left:962.8px;top:271.3px">红花岗区</div>
<i class="mk" style="left:1338.5px;top:263.2px"></i>
<div class="lb" style="left:1342.8px;top:260.3px">江口县</div>
<i class="mk r" style="left:1404.8px;top:256.2px"></i>
<div class="lb cb" style="left:1409.2px;top:249.4px">铜仁</div>
<i class="mk" style="left:1155.5px;top:368.8px"></i>
<div class="lb" style="left:1159.8px;top:365.8px">余庆县</div>
<i class="mk" style="left:1070.5px;top:398.8px"></i>
<div class="lb" style="left:1074.8px;top:395.8px">瓮安县</div>
<i class="mk" style="left:1198.0px;top:409.0px"></i>
<div class="lb" style="left:1202.3px;top:406.1px">施秉县</div>
<i class="mk" style="left:1258.5px;top:405.0px"></i>
<div class="lb" style="left:1262.8px;top:402.1px">镇远县</div>
<i class="mk" style="left:1353.0px;top:362.5px"></i>
<div class="lb" style="left:1357.3px;top:359.6px">玉屏侗族自治县</div>
<i class="mk" style="left:1334.2px;top:378.2px"></i>
<div class="lb" style="left:1338.5px;top:375.3px">岑巩县</div>
<i class="mk" style="left:1306.0px;top:426.8px"></i>
<div class="lb" style="left:1310.3px;top:423.8px">三穗县</div>
<i class="mk" style="left:1409.8px;top:436.2px"></i>
<div class="lb" style="left:1414.0px;top:433.3px">天柱县</div>
<i class="mk" style="left:1158.0px;top:437.0px"></i>
<div class="lb" style="left:1162.3px;top:434.1px">黄平县</div>
<i class="mk" style="left:1260.5px;top:475.0px"></i>
<div class="lb" style="left:1264.8px;top:472.1px">剑河县</div>
<i class="mk" style="left:1080.5px;top:484.2px"></i>
<div class="lb" style="left:1084.8px;top:481.3px">福泉</div>
<i class="mk" style="left:1024.8px;top:506.8px"></i>
<div class="lb" style="left:1029.0px;top:503.8px">贵定县</div>
<i class="mk" style="left:1408.5px;top:487.5px"></i>
<div class="lb" style="left:1412.8px;top:484.6px">锦屏县</div>
<i class="mk" style="left:1413.5px;top:300.0px"></i>
<div class="lb" style="left:1417.8px;top:297.1px">万山区</div>
<i class="mk r" style="left:1565.5px;top:292.0px"></i>
<div class="lb cb" style="left:1570.0px;top:285.2px">怀化</div>
<i class="mk" style="left:1503.8px;top:318.8px"></i>
<div class="lb" style="left:1508.0px;top:315.8px">芷江侗族自治县</div>
<i class="mk" style="left:1566.2px;top:392.5px"></i>
<div class="lb" style="left:1570.5px;top:389.6px">洪江</div>
<i class="mk" style="left:1767.5px;top:392.0px"></i>
<div class="lb" style="left:1771.8px;top:389.1px">隆回县</div>
<i class="mk" style="left:1815.5px;top:418.8px"></i>
<div class="lb" style="left:1819.8px;top:415.8px">邵阳县</div>
<i class="mk" style="left:1513.5px;top:441.2px"></i>
<div class="lb" style="left:1517.8px;top:438.3px">会同县</div>
<i class="mk" style="left:1505.5px;top:507.0px"></i>
<div class="lb ml" style="left:1509.8px;top:498.9px">靖州苗族<br>侗族自治县</div>
<i class="mk" style="left:1596.0px;top:507.0px"></i>
<div class="lb" style="left:1600.3px;top:504.1px">绥宁县</div>
<i class="mk" style="left:1825.5px;top:256.2px"></i>
<div class="lb" style="left:1829.8px;top:253.3px">新邵县</div>
<i class="mk" style="left:253.5px;top:543.0px"></i>
<div class="lb" style="left:257.8px;top:540.1px">会泽县</div>
<i class="mk" style="left:411.5px;top:586.2px"></i>
<div class="lb" style="left:415.8px;top:583.4px">宣威</div>
<i class="mk" style="left:232.2px;top:615.5px"></i>
<div class="lb" style="left:236.6px;top:612.6px">东川区</div>
<i class="mk" style="left:441.0px;top:703.8px"></i>
<div class="lb" style="left:445.3px;top:700.9px">富源县</div>
<i class="mk" style="left:356.5px;top:719.5px"></i>
<div class="lb" style="left:360.8px;top:716.6px">沾益区</div>
<i class="mk r" style="left:351.0px;top:743.0px"></i>
<div class="lb cb" style="left:355.5px;top:736.2px">曲靖</div>
<i class="mk" style="left:92.2px;top:730.5px"></i>
<div class="lb ml" style="left:96.5px;top:722.4px">禄劝彝族<br>苗族自治县</div>
<i class="mk" style="left:246.0px;top:728.8px"></i>
<div class="lb ml" style="left:250.3px;top:720.6px">寻甸回族<br>彝族自治县</div>
<i class="mk" style="left:-26.5px;top:697.0px"></i>
<div class="lb" style="left:-22.2px;top:694.1px">武定县</div>
<i class="mk" style="left:830.5px;top:545.0px"></i>
<div class="lb" style="left:834.8px;top:542.1px">平坝区</div>
<i class="mk" style="left:914.2px;top:544.5px"></i>
<div class="lb" style="left:918.5px;top:541.6px">花溪区</div>
<i class="mk" style="left:737.2px;top:566.2px"></i>
<div class="lb" style="left:741.5px;top:563.4px">普定县</div>
<i class="mk" style="left:680.5px;top:587.0px"></i>
<div class="lb" style="left:684.8px;top:584.1px">六枝特区</div>
<i class="mk" style="left:911.5px;top:604.5px"></i>
<div class="lb" style="left:915.8px;top:601.6px">惠水县</div>
<i class="mk" style="left:871.8px;top:628.0px"></i>
<div class="lb" style="left:876.0px;top:625.1px">长顺县</div>
<i class="mk" style="left:708.5px;top:644.2px"></i>
<div class="lb ml" style="left:712.8px;top:636.1px">镇宁布依族<br>苗族自治县</div>
<i class="mk" style="left:629.2px;top:669.5px"></i>
<div class="lb" style="left:633.5px;top:666.6px">晴隆县</div>
<i class="mk" style="left:577.5px;top:680.0px"></i>
<div class="lb" style="left:581.8px;top:677.1px">普安县</div>
<i class="mk" style="left:484.0px;top:696.8px"></i>
<div class="lb" style="left:488.3px;top:693.9px">盘州市</div>
<i class="mk" style="left:799.8px;top:687.5px"></i>
<div class="lb ml" style="left:804.0px;top:679.4px">紫云苗族布<br>依族自治县</div>
<i class="mk" style="left:623.0px;top:755.5px"></i>
<div class="lb" style="left:627.3px;top:752.6px">兴仁县</div>
<i class="mk" style="left:974.8px;top:535.8px"></i>
<div class="lb" style="left:979.0px;top:532.9px">龙里县</div>
<i class="mk" style="left:1094.2px;top:528.0px"></i>
<div class="lb" style="left:1098.5px;top:525.1px">麻江县</div>
<i class="mk" style="left:1189.8px;top:552.0px"></i>
<div class="lb" style="left:1194.0px;top:549.1px">雷山县</div>
<i class="mk" style="left:1396.0px;top:583.2px"></i>
<div class="lb" style="left:1400.3px;top:580.4px">黎平县</div>
<i class="mk" style="left:1132.5px;top:590.5px"></i>
<div class="lb" style="left:1136.8px;top:587.6px">丹寨县</div>
<i class="mk" style="left:1149.0px;top:637.0px"></i>
<div class="lb" style="left:1153.3px;top:634.1px">三都水族自治县</div>
<i class="mk" style="left:1275.5px;top:648.0px"></i>
<div class="lb" style="left:1279.8px;top:645.1px">榕江县</div>
<i class="mk" style="left:1042.2px;top:672.5px"></i>
<div class="lb" style="left:1046.5px;top:669.6px">平塘县</div>
<i class="mk" style="left:1084.8px;top:672.5px"></i>
<div class="lb" style="left:1089.0px;top:669.6px">独山县</div>
<i class="mk" style="left:1351.0px;top:686.2px"></i>
<div class="lb" style="left:1355.3px;top:683.4px">从江县</div>
<i class="mk" style="left:1151.5px;top:760.8px"></i>
<div class="lb" style="left:1155.8px;top:757.9px">荔波县</div>
<i class="mk r" style="left:1168.5px;top:517.5px"></i>
<div class="lb cb" style="left:1173.0px;top:510.7px">凯里</div>
<i class="mk" style="left:1733.0px;top:538.8px"></i>
<div class="lb" style="left:1737.3px;top:535.9px">新宁县</div>
<i class="mk" style="left:1823.0px;top:548.2px"></i>
<div class="lb" style="left:1827.3px;top:545.4px">东安县</div>
<i class="mk" style="left:1523.0px;top:599.5px"></i>
<div class="lb" style="left:1527.3px;top:596.6px">通道侗族自治县</div>
<i class="mk" style="left:1775.0px;top:648.8px"></i>
<div class="lb" style="left:1779.3px;top:645.9px">全州县</div>
<i class="mk" style="left:1488.5px;top:680.0px"></i>
<div class="lb" style="left:1492.8px;top:677.1px">三江侗族自治县</div>
<i class="mk" style="left:1567.0px;top:676.8px"></i>
<div class="lb" style="left:1571.3px;top:673.9px">龙胜各族自治县</div>
<i class="mk" style="left:1791.8px;top:744.5px"></i>
<div class="lb" style="left:1796.0px;top:741.6px">灌阳县</div>
<i class="mk" style="left:202.8px;top:775.8px"></i>
<div class="lb" style="left:207.1px;top:772.9px">嵩明县</div>
<i class="mk" style="left:713.5px;top:765.2px"></i>
<div class="lb" style="left:717.8px;top:762.3px">贞丰县</div>
<i class="mk" style="left:801.8px;top:810.8px"></i>
<div class="lb" style="left:806.1px;top:807.9px">望谟县</div>
<i class="mk" style="left:930.2px;top:757.5px"></i>
<div class="lb" style="left:934.5px;top:754.6px">罗甸县</div>
<div class="lb pb" style="left:613.3px;top:774.2px;width:120px">黔西南布依<br>族苗族自治州</div>
<i class="mk" style="left:1628.8px;top:760.8px"></i>
<div class="lb" style="left:1633.1px;top:757.9px">灵川县</div>
<i class="mk" style="left:1624.8px;top:780.8px"></i>
<div class="lb" style="left:1629.1px;top:777.9px">叠彩区</div>
<i class="mk r" style="left:1600.5px;top:798.2px"></i>
<div class="lb cb" style="left:1605.0px;top:791.4px">桂林</div>
<i class="mk" style="left:1827.8px;top:790.2px"></i>
<div class="lb" style="left:1832.1px;top:787.3px">江永县</div>
<svg class="abs" style="left:0;top:0;overflow:visible" width="1841" height="815" viewBox="58 206 1841 815">
<defs><g id="pb"><path d="M-2.800 8L-.1 11.800L2.600 8z" fill="#62a6ec"/><ellipse rx="9.600" ry="9.200" fill="#62a6ec"/><ellipse cx=".5" cy="-3" rx="1.600" ry="1.500" fill="#ecc9aa"/><path d="M-1.500 -3.600a2.300 2 0 0 1 4.600 -.3l-.5 1.200l-.9 -1.400l-2.400 .1z" fill="#1c1816"/><rect x="-1.900" y="-1.300" width="4.900" height="4.200" rx=".6" fill="#1b1f27"/><rect x="-1.400" y="2.700" width="4.100" height="2.700" fill="#272a30"/><rect x="-1.700" y="5" width="4.800" height="1.100" rx=".4" fill="#0b0b0b"/><rect x="-4" y="-.9" width="2.600" height="1.400" fill="#1b1f27"/><rect x="-4.400" y="-1.300" width="1.200" height="1.300" fill="#ecc9aa"/><rect x="-.4" y="-1" width="1" height="2.600" fill="#d8372a"/><rect x="1.700" y="-.2" width="1.300" height="1.300" fill="#7d8a7a"/></g><g id="pr"><path d="M-3 7.800L0 11.800L3 7.800z" fill="#ec5f4b"/><circle r="9" fill="#ec5f4b"/><g stroke="#fff" stroke-width=".8" fill="none"><path d="M0 -4.500v7M-4.500 -2.800h9M-3 3h6"/><path d="M-6 .5a2 1.500 0 0 0 4 0zM2 .5a2 1.500 0 0 0 4 0z" fill="#fff" stroke="none"/><path d="M-4 -2.800l-1.800 3M-4 -2.800l1.800 3M4 -2.800l-1.800 3M4 -2.800l1.800 3" stroke-width=".5"/></g></g><filter id="sh" x="-30%" y="-30%" width="160%" height="170%"><feDropShadow dx="0" dy=".6" stdDeviation="1.600" flood-color="#202830" flood-opacity=".45"/></filter></defs>
<g>
<use href="#pr" x="981.2" y="715" filter="url(#sh)"/>
<use href="#pr" x="973.8" y="701.2" filter="url(#sh)"/>
<use href="#pr" x="702.2" y="559.5" filter="url(#sh)"/>
<use href="#pb" x="936.8" y="308.8" filter="url(#sh)"/>
<use href="#pb" x="1008.0" y="358.8" filter="url(#sh)"/>
<use href="#pb" x="889.2" y="521.2" filter="url(#sh)"/>
<use href="#pb" x="743.5" y="553.0" filter="url(#sh)"/>
<use href="#pb" x="763.0" y="591.8" filter="url(#sh)"/>
<use href="#pb" x="849.8" y="621.2" filter="url(#sh)"/>
<use href="#pb" x="987.2" y="608.0" filter="url(#sh)"/>
<use href="#pb" x="595.5" y="596.2" filter="url(#sh)"/>
<use href="#pb" x="587.5" y="603.8" filter="url(#sh)"/>
<use href="#pb" x="797.2" y="703.0" filter="url(#sh)"/>
<use href="#pb" x="619.2" y="713.8" filter="url(#sh)"/>
<use href="#pb" x="640.5" y="723.8" filter="url(#sh)"/>
<use href="#pb" x="965.3" y="693.8" filter="url(#sh)"/>
<use href="#pb" x="958.1" y="704.7" filter="url(#sh)"/>
<use href="#pb" x="988.4" y="700.0" filter="url(#sh)"/>
<use href="#pb" x="973.1" y="716.2" filter="url(#sh)"/>
<use href="#pb" x="979.4" y="714.4" filter="url(#sh)"/>
<use href="#pb" x="991.9" y="710.0" filter="url(#sh)"/>
<use href="#pb" x="1211.2" y="571.2" filter="url(#sh)"/>
<use href="#pb" x="1418.0" y="541.8" filter="url(#sh)"/>
<use href="#pb" x="1488.5" y="613.8" filter="url(#sh)"/>
<use href="#pb" x="790.5" y="776.2" filter="url(#sh)"/>
<use href="#pb" x="808.0" y="781.2" filter="url(#sh)"/>
<use href="#pb" x="821.8" y="791.2" filter="url(#sh)"/>
<use href="#pb" x="813.0" y="783.8" filter="url(#sh)"/>
<use href="#pb" x="834.2" y="787.0" filter="url(#sh)"/>
<use href="#pb" x="778.0" y="845.0" filter="url(#sh)"/>
<use href="#pb" x="763.0" y="854.2" filter="url(#sh)"/>
<use href="#pb" x="639.2" y="887.0" filter="url(#sh)"/>
<use href="#pb" x="1177.2" y="723.8" filter="url(#sh)"/>
<use href="#pb" x="1218.0" y="723.8" filter="url(#sh)"/>
<use href="#pb" x="1229.2" y="718.8" filter="url(#sh)"/>
<use href="#pb" x="1184.2" y="800.5" filter="url(#sh)"/>
<use href="#pb" x="1337.2" y="855.0" filter="url(#sh)"/>
<use href="#pr" x="1025.5" y="460.0" filter="url(#sh)"/>
<use href="#pr" x="1465.5" y="463.8" filter="url(#sh)"/>
<use href="#pr" x="1240.5" y="723.8" filter="url(#sh)"/>
</g></svg>
<div class="ol" style="left:1098.0px;top:484.8px;width:154px"><span class="ow" style="width:24.6px"><svg width="13" height="14" viewBox="0 0 13 14" style="position:absolute;left:6.700px;top:1.500px"><g fill="#eb7a2a" stroke="#eb7a2a" stroke-linecap="round" stroke-linejoin="round"><circle cx="4.200" cy="1.600" r="1.350" stroke="none"/><path d="M4.500 3.600L6.800 7.500" stroke-width="2.300" fill="none"/><path d="M4 4.200L2.400 6.300L.8 7" stroke-width="1.100" fill="none"/><path d="M5.200 4.300L7.200 6.200L7.900 7.800" stroke-width=".9" fill="none"/><path d="M6.500 7.800L4.300 10.300L3.100 13.100" stroke-width="1.400" fill="none"/><path d="M6.900 7.800L6.700 10.300L7.900 12.900" stroke-width="1.400" fill="none"/><rect x="7.600" y="7.900" width="4.200" height="3.100" rx=".5" stroke="none" transform="rotate(-28 9.700 9.450)"/></g></svg></span><span class="ot" style="left:27.0px">(2019)黔2601执1354号</span></div>
<div class="ol" style="left:467.0px;top:364.9px;width:154px"><span class="ow" style="width:24.6px"><svg width="13" height="14" viewBox="0 0 13 14" style="position:absolute;left:6.700px;top:1.500px"><g fill="#eb7a2a" stroke="#eb7a2a" stroke-linecap="round" stroke-linejoin="round"><circle cx="4.200" cy="1.600" r="1.350" stroke="none"/><path d="M4.500 3.600L6.800 7.500" stroke-width="2.300" fill="none"/><path d="M4 4.200L2.400 6.300L.8 7" stroke-width="1.100" fill="none"/><path d="M5.200 4.300L7.200 6.200L7.900 7.800" stroke-width=".9" fill="none"/><path d="M6.500 7.800L4.300 10.300L3.100 13.100" stroke-width="1.400" fill="none"/><path d="M6.900 7.800L6.700 10.300L7.900 12.900" stroke-width="1.400" fill="none"/><rect x="7.600" y="7.900" width="4.200" height="3.100" rx=".5" stroke="none" transform="rotate(-28 9.700 9.450)"/></g></svg></span><span class="ot" style="left:27.0px">(2019)黔0527执恢70号</span></div>
<div class="ol" style="left:499.0px;top:474.9px;width:128.5px"><span class="ow" style="width:24.6px"><svg width="13" height="14" viewBox="0 0 13 14" style="position:absolute;left:6.700px;top:1.500px"><g fill="#eb7a2a" stroke="#eb7a2a" stroke-linecap="round" stroke-linejoin="round"><circle cx="4.200" cy="1.600" r="1.350" stroke="none"/><path d="M4.500 3.600L6.800 7.500" stroke-width="2.300" fill="none"/><path d="M4 4.200L2.400 6.300L.8 7" stroke-width="1.100" fill="none"/><path d="M5.200 4.300L7.200 6.200L7.900 7.800" stroke-width=".9" fill="none"/><path d="M6.500 7.800L4.300 10.300L3.100 13.100" stroke-width="1.400" fill="none"/><path d="M6.900 7.800L6.700 10.300L7.900 12.900" stroke-width="1.400" fill="none"/><rect x="7.600" y="7.900" width="4.200" height="3.100" rx=".5" stroke="none" transform="rotate(-28 9.700 9.450)"/></g></svg></span><span class="ot" style="left:27.0px">(2019)黔02执74号</span></div>
<div class="ol" style="left:1297.0px;top:301.9px;width:148.5px"><span class="ow" style="width:24.6px"><svg width="13" height="14" viewBox="0 0 13 14" style="position:absolute;left:6.700px;top:1.500px"><g fill="#eb7a2a" stroke="#eb7a2a" stroke-linecap="round" stroke-linejoin="round"><circle cx="4.200" cy="1.600" r="1.350" stroke="none"/><path d="M4.500 3.600L6.800 7.500" stroke-width="2.300" fill="none"/><path d="M4 4.200L2.400 6.300L.8 7" stroke-width="1.100" fill="none"/><path d="M5.200 4.300L7.200 6.200L7.900 7.800" stroke-width=".9" fill="none"/><path d="M6.500 7.800L4.300 10.300L3.100 13.100" stroke-width="1.400" fill="none"/><path d="M6.900 7.800L6.700 10.300L7.900 12.900" stroke-width="1.400" fill="none"/><rect x="7.600" y="7.900" width="4.200" height="3.100" rx=".5" stroke="none" transform="rotate(-28 9.700 9.450)"/></g></svg></span><span class="ot" style="left:27.0px">(2019)黔2626执243号</span></div>
<div class="ol" style="left:1108.0px;top:478.9px;width:155.9px"><span class="ow" style="width:24.6px"><svg width="13" height="14" viewBox="0 0 13 14" style="position:absolute;left:6.700px;top:1.500px"><g fill="#eb7a2a" stroke="#eb7a2a" stroke-linecap="round" stroke-linejoin="round"><circle cx="4.200" cy="1.600" r="1.350" stroke="none"/><path d="M4.500 3.600L6.800 7.500" stroke-width="2.300" fill="none"/><path d="M4 4.200L2.400 6.300L.8 7" stroke-width="1.100" fill="none"/><path d="M5.200 4.300L7.200 6.200L7.900 7.800" stroke-width=".9" fill="none"/><path d="M6.500 7.800L4.300 10.300L3.100 13.100" stroke-width="1.400" fill="none"/><path d="M6.900 7.800L6.700 10.300L7.900 12.900" stroke-width="1.400" fill="none"/><rect x="7.600" y="7.900" width="4.200" height="3.100" rx=".5" stroke="none" transform="rotate(-28 9.700 9.450)"/></g></svg></span><span class="ot" style="left:27.0px">(2019)黔2601执1334号</span></div>
<div class="ol" style="left:693.0px;top:544.9px;width:153.3px"><span class="ow" style="width:24.6px"><svg width="13" height="14" viewBox="0 0 13 14" style="position:absolute;left:6.700px;top:1.500px"><g fill="#eb7a2a" stroke="#eb7a2a" stroke-linecap="round" stroke-linejoin="round"><circle cx="4.200" cy="1.600" r="1.350" stroke="none"/><path d="M4.500 3.600L6.800 7.500" stroke-width="2.300" fill="none"/><path d="M4 4.200L2.400 6.300L.8 7" stroke-width="1.100" fill="none"/><path d="M5.200 4.300L7.200 6.200L7.900 7.800" stroke-width=".9" fill="none"/><path d="M6.500 7.800L4.300 10.300L3.100 13.100" stroke-width="1.400" fill="none"/><path d="M6.900 7.800L6.700 10.300L7.900 12.900" stroke-width="1.400" fill="none"/><rect x="7.600" y="7.900" width="4.200" height="3.100" rx=".5" stroke="none" transform="rotate(-28 9.700 9.450)"/></g></svg></span><span class="ot" style="left:27.0px">(2019)黔0402执2111号</span></div>
<div class="ol" style="left:657.0px;top:605.9px;width:155px"><span class="ow" style="width:24.6px"><svg width="13" height="14" viewBox="0 0 13 14" style="position:absolute;left:6.700px;top:1.500px"><g fill="#eb7a2a" stroke="#eb7a2a" stroke-linecap="round" stroke-linejoin="round"><circle cx="4.200" cy="1.600" r="1.350" stroke="none"/><path d="M4.500 3.600L6.800 7.500" stroke-width="2.300" fill="none"/><path d="M4 4.200L2.400 6.300L.8 7" stroke-width="1.100" fill="none"/><path d="M5.200 4.300L7.200 6.200L7.900 7.800" stroke-width=".9" fill="none"/><path d="M6.500 7.800L4.300 10.300L3.100 13.100" stroke-width="1.400" fill="none"/><path d="M6.900 7.800L6.700 10.300L7.900 12.900" stroke-width="1.400" fill="none"/><rect x="7.600" y="7.900" width="4.200" height="3.100" rx=".5" stroke="none" transform="rotate(-28 9.700 9.450)"/></g></svg></span><span class="ot" style="left:27.0px">(2019)黔0423执恢39号</span></div>
<div class="ol" style="left:1064.0px;top:560.9px;width:148.5px"><span class="ow" style="width:24.6px"><svg width="13" height="14" viewBox="0 0 13 14" style="position:absolute;left:6.700px;top:1.500px"><g fill="#eb7a2a" stroke="#eb7a2a" stroke-linecap="round" stroke-linejoin="round"><circle cx="4.200" cy="1.600" r="1.350" stroke="none"/><path d="M4.500 3.600L6.800 7.500" stroke-width="2.300" fill="none"/><path d="M4 4.200L2.400 6.300L.8 7" stroke-width="1.100" fill="none"/><path d="M5.200 4.300L7.200 6.200L7.900 7.800" stroke-width=".9" fill="none"/><path d="M6.500 7.800L4.300 10.300L3.100 13.100" stroke-width="1.400" fill="none"/><path d="M6.900 7.800L6.700 10.300L7.900 12.900" stroke-width="1.400" fill="none"/><rect x="7.600" y="7.900" width="4.200" height="3.100" rx=".5" stroke="none" transform="rotate(-28 9.700 9.450)"/></g></svg></span><span class="ot" style="left:27.0px">(2019)黔2636执238号</span></div>
<div class="ol" style="left:1217.0px;top:615.9px;width:154.3px"><span class="ow" style="width:24.6px"><svg width="13" height="14" viewBox="0 0 13 14" style="position:absolute;left:6.700px;top:1.500px"><g fill="#eb7a2a" stroke="#eb7a2a" stroke-linecap="round" stroke-linejoin="round"><circle cx="4.200" cy="1.600" r="1.350" stroke="none"/><path d="M4.500 3.600L6.800 7.500" stroke-width="2.300" fill="none"/><path d="M4 4.200L2.400 6.300L.8 7" stroke-width="1.100" fill="none"/><path d="M5.200 4.300L7.200 6.200L7.900 7.800" stroke-width=".9" fill="none"/><path d="M6.500 7.800L4.300 10.300L3.100 13.100" stroke-width="1.400" fill="none"/><path d="M6.900 7.800L6.700 10.300L7.900 12.900" stroke-width="1.400" fill="none"/><rect x="7.600" y="7.900" width="4.200" height="3.100" rx=".5" stroke="none" transform="rotate(-28 9.700 9.450)"/></g></svg></span><span class="ot" style="left:27.0px">(2018)黔2632执恢13号</span></div>
<div class="abs" style="left:0;top:1px;width:1841px;height:814px">
<div class="tsq" style="left:1493.0px;width:22.4px"></div><div class="tsq" style="left:1524.2px;width:20.6px"></div><div class="tsq" style="left:1554.2px;width:21.6px"></div><div class="tsq" style="left:1586.0px;width:20.7px"></div><div class="tsq" style="left:1616.0px;width:21.3px"></div>
<svg class="abs" style="left:1493px;top:2px" width="146" height="26" viewBox="1551 209 146 26">
<circle cx="1562.100" cy="221" r="7.300" fill="#ececec" stroke="#d4d4d4" stroke-width=".8"/><circle cx="1562.100" cy="221" r="6.200" fill="#565c60"/><path d="M1559.400 220.700v-2h1v1.400h.6v-2.300h1.100v2.300h.6v-1.900h1.100v2.400l.9-.8.900.8-1.800 2.500v1.100h-3.500v-1.100z" fill="#fff"/>
<rect x="1584.600" y="214.100" width="16.400" height="12.300" fill="none" stroke="#9b9b9b" stroke-width="1.200" stroke-dasharray="2.500 1.900"/><path d="M1593.300 216.300L1602.300 222.400L1598.400 223.100L1602.400 228L1600.500 229.200L1596.400 224.600L1593.800 227.300z" fill="#999" stroke="#fff" stroke-width=".9"/>
<circle cx="1623" cy="221" r="5.800" fill="#999"/><path d="M1619.600 221.800a3.700 3.700 0 0 0 6.800 0" fill="none" stroke="#fff" stroke-width="1.200"/><path d="M1614.800 221.500a8.300 8.300 0 0 1 16.400 0" fill="none" stroke="#999" stroke-width="1.200"/><rect x="1613.800" y="219.400" width="2.200" height="4.600" rx=".8" fill="#999"/><rect x="1630" y="219.400" width="2.200" height="4.600" rx=".8" fill="#999"/><path d="M1631 224c-.5 2.800-2.500 4.300-6 4.600" fill="none" stroke="#999" stroke-width="1.100"/>
<path d="M1646 213.200h16a1 1 0 0 1 1 1v9.600a1 1 0 0 1-1 1h-2.200l-.6 4-3.800-4h-9.400a1 1 0 0 1-1-1v-9.600a1 1 0 0 1 1-1z" fill="#999"/><g fill="#fff"><circle cx="1650" cy="219.200" r="1.150"/><circle cx="1654.200" cy="219.200" r="1.150"/><circle cx="1658.300" cy="219.200" r="1.150"/></g>
<path d="M1684 213.200l9.200 3.600-9.200 3.600-9.200-3.600z" fill="#999"/><path d="M1675.200 220.600l8.800 3.500 8.800-3.500M1675.200 224.500l8.800 3.500 8.800-3.500" fill="none" stroke="#999" stroke-width="1.900"/>
</svg>
<div class="abs" style="left:1566px;top:-5.200px;width:18px;height:18px;border-radius:50%;background:#ea6878;color:#fff;font-size:12.500px;line-height:18px;text-align:center">8</div>
<div class="abs" style="left:1647px;top:2px;width:142.500px;height:26.600px;background:#fff"><span class="abs" style="left:10.300px;top:4px;font-size:12.100px;line-height:19px;color:#9b9b9b;white-space:nowrap">指挥中心、人员查找</span></div>
<div class="abs" style="left:1789px;top:2px;width:38px;height:26.600px;background:#3277b3"><svg class="abs" style="left:9px;top:5px" width="20" height="19" viewBox="0 0 20 19"><circle cx="8" cy="8" r="5.800" fill="none" stroke="#fff" stroke-width="1.700"/><path d="M12.300 12.300l6 5" stroke="#fff" stroke-width="1.900" stroke-linecap="round"/></svg></div>
<svg class="abs" style="left:8px;top:640px;overflow:visible" width="42" height="166" viewBox="66 847 42 166">
<defs><linearGradient id="bg1" x1="0" y1="0" x2="0" y2="1"><stop offset="0" stop-color="#fff"/><stop offset="1" stop-color="#e4e4e4"/></linearGradient></defs>
<circle cx="86.400" cy="868.500" r="17" fill="url(#bg1)" stroke="#b4b4b4" stroke-width="1"/>
<g fill="none" stroke="#4a7be0" stroke-width="1.700"><path d="M82.300 859.500l4.100-3.800 4.100 3.800M82.300 877.500l4.100 3.800 4.100-3.800M77.500 864.400l-3.800 4.100 3.800 4.100M95.300 864.400l3.800 4.100-3.800 4.100"/></g>
<rect x="84.600" y="905" width="5.200" height="90" fill="#fafafa" stroke="#b9b9b9" stroke-width=".8"/>
<rect x="84.600" y="971" width="5.200" height="24" fill="#8fb0f0" stroke="#7294dd" stroke-width=".8"/>
<rect x="79" y="891.500" width="15" height="14.500" rx="2" fill="url(#bg1)" stroke="#aaa" stroke-width="1"/><path d="M83 898.700h7M86.500 895.200v7" stroke="#4a7be0" stroke-width="1.300"/>
<rect x="78.400" y="962" width="15.500" height="8.700" rx="2" fill="url(#bg1)" stroke="#aaa" stroke-width="1"/><path d="M82.300 966.400h8" stroke="#4a7be0" stroke-width="1.300"/>
</svg>
<div class="abs" style="left:3px;top:777px;width:66px;height:20px">
<span class="abs" style="left:.5px;top:-.5px;font:700 15px/20px 'Liberation Sans',sans-serif;color:#e10602;letter-spacing:-0.7px;text-shadow:0 0 1px #fff,0 0 2px #fff,1px 0 0 #fff,-1px 0 0 #fff,0 1px 0 #fff,0 -1px 0 #fff,1px 1px 0 #fff,-1px -1px 0 #fff">Bai</span>
<svg class="abs" style="left:18.500px;top:-5.500px;overflow:visible" width="21" height="22.900" viewBox="0 0 22 24"><g fill="#2a2ae0" stroke="#fff" stroke-width="1.200" paint-order="stroke"><ellipse cx="4" cy="10" rx="2.400" ry="3.100"/><ellipse cx="8.500" cy="4.800" rx="2.400" ry="3.100"/><ellipse cx="14.200" cy="4.800" rx="2.400" ry="3.100"/><ellipse cx="18.800" cy="10" rx="2.400" ry="3.100"/><path d="M11.300 10c3 0 4.500 3.500 6.500 5.500 2 2.300.5 6-2.500 6-1.500 0-2.500-.5-4-.5s-2.500.5-4 .5c-3 0-4.500-3.700-2.500-6 2-2 3.500-5.500 6.500-5.500z"/></g></svg>
<span class="abs" style="left:42px;top:2.500px;width:24px;font:700 11.200px/16px 'Liberation Sans','Noto Sans CJK SC',sans-serif;color:#e10602;text-align:center;letter-spacing:-0.5px;text-shadow:0 0 1px #fff,0 0 2px #fff,1px 0 0 #fff,-1px 0 0 #fff,0 1px 0 #fff,0 -1px 0 #fff,1px 1px 0 #fff,-1px -1px 0 #fff">地图</span>
</div>
<svg class="abs" style="left:20px;top:782px;overflow:visible" width="16" height="22" viewBox="78 989 16 22"><defs><linearGradient id="bg2" x1="0" y1="0" x2="0" y2="1"><stop offset="0" stop-color="#fff"/><stop offset="1" stop-color="#e4e4e4"/></linearGradient></defs><rect x="84.600" y="971" width="5.200" height="24" fill="#8fb0f0" stroke="#7294dd" stroke-width=".8"/><rect x="78.700" y="993.800" width="14.500" height="14.400" rx="2" fill="url(#bg2)" stroke="#aaa" stroke-width="1"/><path d="M82.500 1001.100h7" stroke="#4a7be0" stroke-width="1.400"/></svg>
<div class="abs" style="left:73px;top:777.500px;width:52px;height:18px;text-align:center;font-size:12px;line-height:18px;color:#111;white-space:nowrap;text-shadow:0 0 2px #fff">25 公里</div>
<div class="abs" style="left:73px;top:793.800px;width:51.500px;height:3.500px;background:#111"></div><div class="abs" style="left:73px;top:790px;width:1.200px;height:7.500px;background:#222;box-shadow:0 0 0 .6px #f5f5f5"></div><div class="abs" style="left:123.500px;top:790px;width:1.200px;height:7.500px;background:#222;box-shadow:0 0 0 .6px #f5f5f5"></div>
<div class="abs" style="left:0;top:799.500px;width:636px;height:14.500px;background:rgba(255,255,255,.7);font-size:12px;line-height:14px;color:#222;white-space:nowrap;padding-left:2px;letter-spacing:0">© 2019 Baidu - GS(2018)5572号 - 甲测资字1100930 - 京ICP证030173号 - Data © 长地万方 &amp; <span style="color:#7a7ad0">OpenStreetMap</span> &amp; <span style="color:#7a7ad0">HERE</span></div>
<div class="abs" style="left:1769.500px;top:727px;width:55px;height:17px;border-radius:4px;border:1px solid #c9c9c9;background:linear-gradient(#fdfdfd,#e9e9e9);box-shadow:0 1px 1px rgba(0,0,0,.15)"><span class="abs" style="left:27px;top:0;width:1px;height:15px;background:#d5d5d5"></span><span class="abs" style="left:28px;top:-1px;width:26px;text-align:center;font-size:12.500px;line-height:17px;color:#222">关</span></div>
<div class="abs" style="left:1769px;top:748px;width:56px;height:55px;border-radius:5px;background:#dde9f8"><svg class="abs" style="left:16px;top:19px" width="26" height="19" viewBox="0 0 26 19"><defs><linearGradient id="mg" x1="0" y1="0" x2="0" y2="1"><stop offset="0" stop-color="#fcc73a"/><stop offset="1" stop-color="#f08a12"/></linearGradient></defs><rect x=".5" y=".5" width="25" height="18" rx="2.500" fill="url(#mg)" stroke="#f0951c" stroke-width=".8"/><path d="M1.500 2l11.500 9 11.500-9" fill="none" stroke="#fde9a8" stroke-width="1.300"/><path d="M1.500 17.500l8.500-8M24.500 17.500l-8.500-8" fill="none" stroke="#f7b040" stroke-width=".9"/></svg></div>
</div>
</div>
<div id="mtop"></div>
<div id="sbar"><div class="th"></div>
<svg class="abs" style="left:4px;top:7px" width="9" height="5" viewBox="0 0 9 5"><path d="M0 5l4.500-5 4.500 5z" fill="#a3a3a3"/></svg>
<svg class="abs" style="left:4px;top:958px" width="9" height="5" viewBox="0 0 9 5"><path d="M0 0l4.500 5 4.500-5z" fill="#505050"/></svg>
</div>
</body>
</html>
